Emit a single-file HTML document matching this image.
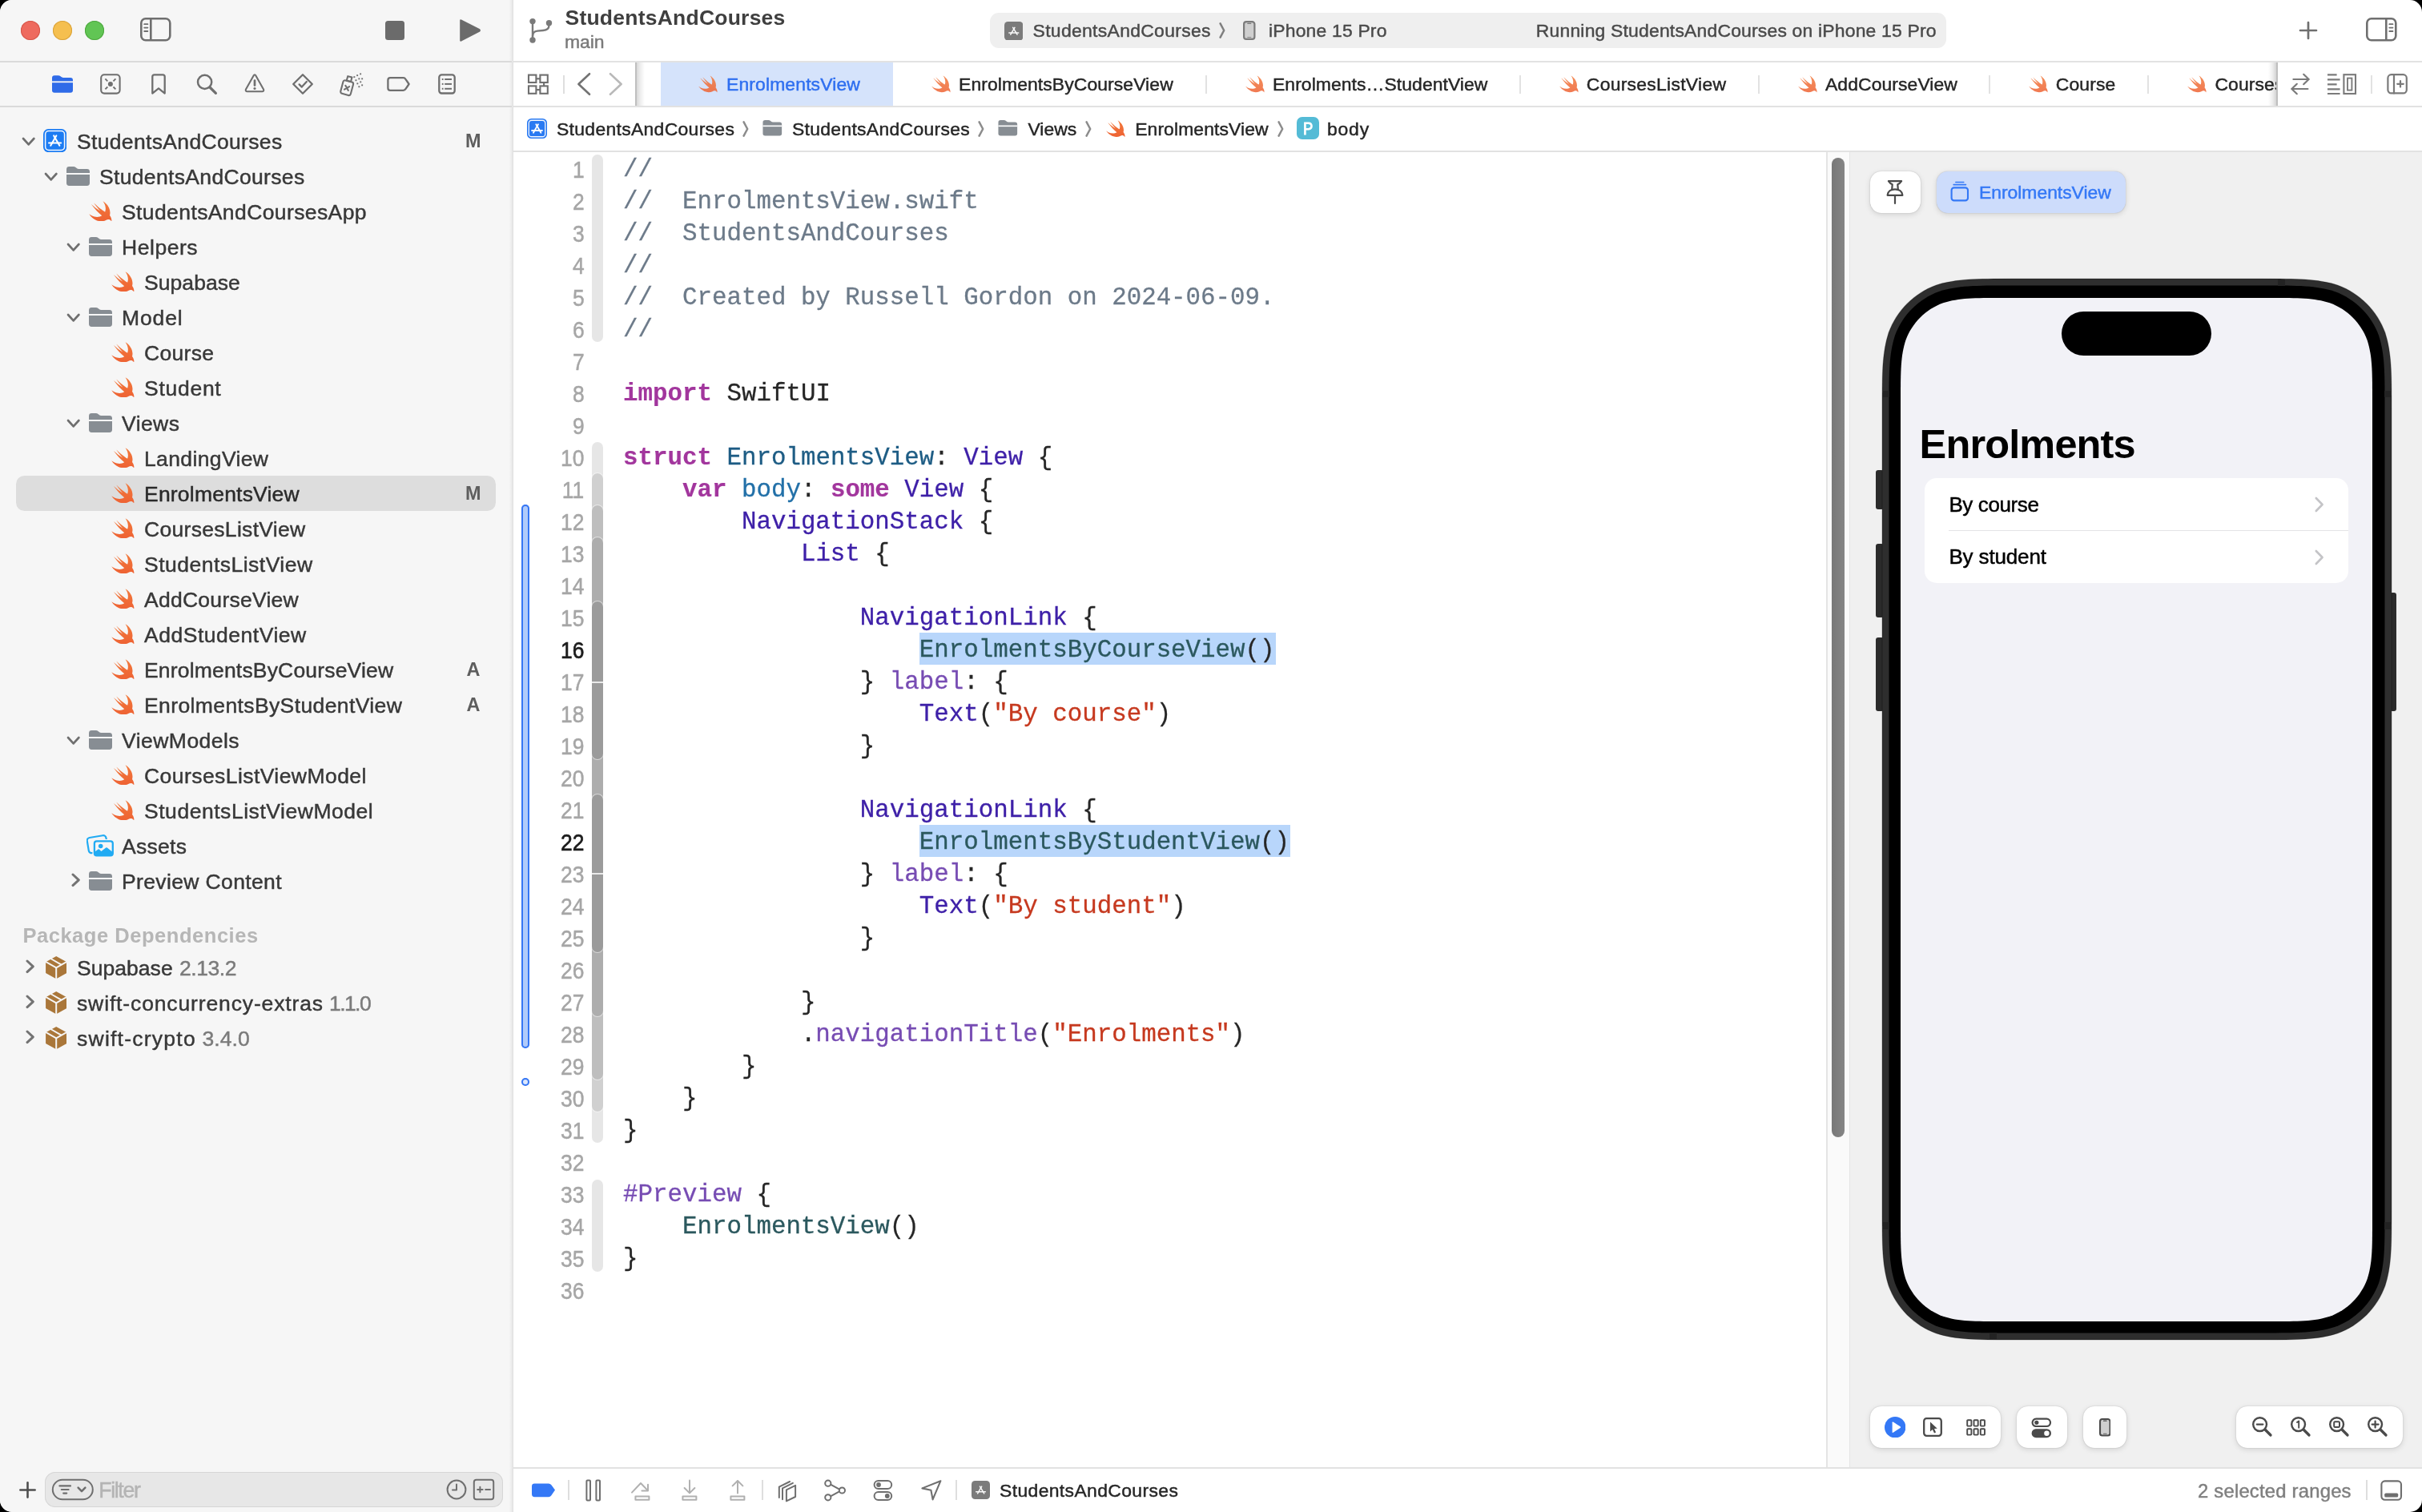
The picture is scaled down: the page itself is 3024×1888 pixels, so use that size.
<!DOCTYPE html>
<html><head><meta charset="utf-8"><title>Xcode</title>
<style>
html,body{margin:0;padding:0;background:#000;}
body{width:3024px;height:1888px;overflow:hidden;position:relative;font-family:"Liberation Sans",sans-serif;}
#win{will-change:transform;position:absolute;left:0;top:0;width:3024px;height:1888px;border-radius:15px;overflow:hidden;background:#fff;}
.a{position:absolute;display:block;}
.t{position:absolute;white-space:pre;font-family:"Liberation Sans",sans-serif;}
.c{position:absolute;white-space:pre;font-family:"Liberation Mono",monospace;font-size:31.8px;letter-spacing:0;height:40px;line-height:40px;left:778px;color:#262626;-webkit-text-stroke:0.3px currentColor;transform:scaleX(0.969);transform-origin:0 0;}
.c b{font-weight:bold;-webkit-text-stroke:0.15px currentColor;}
.k{color:#a2369d}.cm{color:#6c7a89}.s{color:#c6391f}.ty{color:#1d5c84}.od{color:#2270a8}.pc{color:#2b585e}.oc{color:#3e20a8}.of{color:#774cb3}

</style></head><body><div id="win">
<div class="a" style="left:0px;top:0px;width:640px;height:1888px;background:#f6f6f6;"></div>
<div class="a" style="left:0px;top:76px;width:639px;height:2px;background:#dadada;"></div>
<div class="a" style="left:0px;top:132px;width:639px;height:2px;background:#dadada;"></div>
<div class="a" style="left:641px;top:76px;width:2383px;height:2px;background:#e2e2e2;"></div>
<div class="a" style="left:641px;top:132px;width:2383px;height:2px;background:#e2e2e2;"></div>
<div class="a" style="left:641px;top:188px;width:2383px;height:2px;background:#e2e2e2;"></div>
<div class="a" style="left:636px;top:0px;width:5px;height:1888px;background:linear-gradient(90deg,#f5f5f5 0%,#ececec 55%,#dedede 100%);"></div>
<div class="a" style="left:636px;top:76px;width:3px;height:2px;background:#dadada;"></div>
<div class="a" style="left:636px;top:132px;width:3px;height:2px;background:#dadada;"></div>
<div class="a" style="left:641px;top:1832px;width:2383px;height:2px;background:#e2e2e2;"></div>
<div class="a" style="left:26px;top:26px;width:24px;height:24px;background:#ee6a5e;border-radius:50%;box-shadow:inset 0 0 0 1px #d5564a;"></div>
<div class="a" style="left:66px;top:26px;width:24px;height:24px;background:#f5bf4f;border-radius:50%;box-shadow:inset 0 0 0 1px #d9a23b;"></div>
<div class="a" style="left:106px;top:26px;width:24px;height:24px;background:#61c554;border-radius:50%;box-shadow:inset 0 0 0 1px #4ea73f;"></div>
<svg class="a" style="left:174px;top:21px;" width="41" height="32" viewBox="0 0 41 32"><g fill="none" stroke="#6f6f6f" stroke-width="2.6"><rect x="2.3" y="2.3" width="36" height="27" rx="5.5"/><path d="M14.3 2.3 V29.3"/></g><g stroke="#6f6f6f" stroke-width="1.8" stroke-linecap="round"><path d="M6.2 9.2 H10.4"/><path d="M6.2 13.6 H10.4"/><path d="M6.2 18 H10.4"/></g></svg>
<div class="a" style="left:481px;top:26px;width:24px;height:24px;background:#6b6b6b;border-radius:3.5px;"></div>
<svg class="a" style="left:572px;top:22px;" width="32" height="32" viewBox="0 0 32 32"><path d="M2.2 3.6 Q2.2 1.6 4 2.5 L27.2 14.3 Q29 16 27.2 17.6 L4 29.4 Q2.2 30.3 2.2 28.3 Z" fill="#6b6b6b"/></svg>
<svg class="a" style="left:659px;top:21px;" width="33" height="36" viewBox="0 0 33 36"><g fill="none" stroke="#7a7a7a" stroke-width="2.4" stroke-linecap="round"><path d="M6 6 V29"/><path d="M26.5 8.5 V10.5 Q26.5 16.5 19 17 L12 17.6 Q6 18.3 6 24"/></g><g fill="#7a7a7a"><circle cx="6" cy="5.6" r="3.7"/><circle cx="6" cy="29" r="3.7"/><circle cx="26.5" cy="7.8" r="3.7"/></g></svg>
<div class="t" style="left:705.5px;top:4.4px;height:36px;line-height:36px;font-size:26.52px;color:#3f3f3f;letter-spacing:0.22px;font-weight:bold;">StudentsAndCourses</div>
<div class="t" style="left:705.0px;top:35.8px;height:32px;line-height:32px;font-size:22.95px;color:#7a7a7a;letter-spacing:-0.10px;-webkit-text-stroke:0.45px #7a7a7a;">main</div>
<div class="a" style="left:1236px;top:16px;width:1194px;height:44px;background:#efefef;border-radius:11px;"></div>
<svg class="a" style="left:1253.8px;top:26.6px;" width="23.5" height="23.5" viewBox="0 0 29 29"><rect x="0" y="0" width="29" height="29" rx="5.5" fill="#7b7b7b"/><g stroke="#fff" stroke-width="1.9" stroke-linecap="round" fill="none" opacity="0.95"><path d="M9.6 20 L16 9"/><path d="M13.2 9 L19.8 20"/><path d="M7.2 17.2 H21.8"/></g></svg>
<div class="t" style="left:1289.6px;top:22.0px;height:32px;line-height:32px;font-size:22.95px;color:#4a4a4a;letter-spacing:0.30px;-webkit-text-stroke:0.45px #4a4a4a;">StudentsAndCourses</div>
<svg class="a" style="left:1522px;top:27px;" width="9" height="22" viewBox="0 0 9 22"><polyline points="1.6,2.4 6.2,11 1.6,19.6" fill="none" stroke="#7f7f7f" stroke-width="2.5" stroke-linecap="round" stroke-linejoin="round"/></svg>
<svg class="a" style="left:1552px;top:26.2px;" width="15.5" height="24" viewBox="0 0 15.5 24"><rect x="1.1" y="1.1" width="13.3" height="21.8" rx="3" fill="#cfcfcf" stroke="#7b7b7b" stroke-width="2.2"/><rect x="5.2" y="2.7" width="5.1" height="1.4" rx="0.7" fill="#7b7b7b"/><rect x="5.2" y="19.9" width="5.1" height="1.2" rx="0.6" fill="#7b7b7b" opacity="0.8"/></svg>
<div class="t" style="left:1584.0px;top:22.0px;height:32px;line-height:32px;font-size:22.95px;color:#4a4a4a;letter-spacing:0.17px;-webkit-text-stroke:0.45px #4a4a4a;">iPhone 15 Pro</div>
<div class="t" style="left:1917.8px;top:22.0px;height:32px;line-height:32px;font-size:22.95px;color:#4a4a4a;letter-spacing:0.18px;-webkit-text-stroke:0.45px #4a4a4a;">Running StudentsAndCourses on iPhone 15 Pro</div>
<svg class="a" style="left:2868px;top:24px;" width="28" height="28" viewBox="0 0 28 28"><g stroke="#6f6f6f" stroke-width="2.7" stroke-linecap="round"><path d="M14 4 V24"/><path d="M4 14 H24"/></g></svg>
<svg class="a" style="left:2953px;top:21px;" width="42" height="32" viewBox="0 0 42 32"><g fill="none" stroke="#6f6f6f" stroke-width="2.6"><rect x="2.3" y="2.3" width="36" height="27" rx="5.5"/><path d="M26.3 2.3 V29.3"/></g><g stroke="#6f6f6f" stroke-width="1.8" stroke-linecap="round"><path d="M30.3 9.2 H34.5"/><path d="M30.3 13.6 H34.5"/><path d="M30.3 18 H34.5"/></g></svg>
<svg class="a" style="left:64.9px;top:93.8px;" width="26" height="22" viewBox="0 0 29 24"><path fill="#2f6be8" d="M0 3.4 Q0 0 3.4 0 H8.6 Q10.4 0 11.8 1.2 L12.8 2.1 Q13.8 3 15.4 3 H25.6 Q29 3 29 6.4 V20.6 Q29 24 25.6 24 H3.4 Q0 24 0 20.6 Z"/><rect x="0" y="8" width="29" height="2" fill="#f6f6f6"/></svg>
<svg class="a" style="left:123px;top:90px;" width="30" height="30" viewBox="0 0 30 30"><g fill="none" stroke="#6f6f6f" stroke-width="2.1"><rect x="3.2" y="3.2" width="23.4" height="23.4" rx="4"/><path d="M8.4 8.4 L11.3 11.3" stroke-width="1.9"/><path d="M21.4 8.4 L18.5 11.3" stroke-width="1.9"/><path d="M8.4 21.4 L11.3 18.5" stroke-width="1.9"/><path d="M21.4 21.4 L18.5 18.5" stroke-width="1.9"/></g><circle cx="14.9" cy="14.9" r="3" fill="#6f6f6f"/></svg>
<svg class="a" style="left:186px;top:90px;" width="24" height="30" viewBox="0 0 24 30"><path d="M4.3 5.8 Q4.3 3.3 6.8 3.3 H17.2 Q19.7 3.3 19.7 5.8 V26.6 L12 20.4 L4.3 26.6 Z" fill="none" stroke="#6f6f6f" stroke-width="2.3" stroke-linejoin="round"/></svg>
<svg class="a" style="left:243px;top:90px;" width="30" height="30" viewBox="0 0 30 30"><g fill="none" stroke="#6f6f6f" stroke-width="2.5" stroke-linecap="round"><circle cx="12.6" cy="12.4" r="8.6"/><path d="M19 19 L26.4 26.4" stroke-width="3.2"/></g></svg>
<svg class="a" style="left:304px;top:90px;" width="28" height="28" viewBox="0 0 28 28"><path d="M12.6 4.4 Q14 2.2 15.4 4.4 L25 21.4 Q26 24.2 23.2 24.2 H4.8 Q2 24.2 3 21.4 Z" fill="none" stroke="#6f6f6f" stroke-width="2.1" stroke-linejoin="round"/><path d="M14 10.6 V16.6" stroke="#6f6f6f" stroke-width="2.7" stroke-linecap="round"/><circle cx="14" cy="20.5" r="1.55" fill="#6f6f6f"/></svg>
<svg class="a" style="left:362px;top:89px;" width="32" height="32" viewBox="0 0 32 32"><g fill="none" stroke="#6f6f6f" stroke-width="2.3" stroke-linejoin="round" stroke-linecap="round"><path d="M16 4.2 L27.8 16 L16 27.8 L4.2 16 Z"/><path d="M11.6 16.4 L14.8 19.6 L20.8 13"/></g></svg>
<svg class="a" style="left:422px;top:88px;" width="34" height="34" viewBox="0 0 34 34"><g fill="none" stroke="#6f6f6f" stroke-width="2.1" stroke-linejoin="round" stroke-linecap="round" transform="rotate(15 12 22)"><rect x="4.6" y="13.4" width="13" height="17" rx="2.4"/><rect x="8.4" y="7.6" width="5.4" height="5.6"/><path d="M8.6 19.6 L13.6 24.6 M13.6 19.6 L8.6 24.6"/></g><g fill="#6f6f6f"><rect x="19.4" y="7.2" width="1.9" height="1.9"/><rect x="23.2" y="5.2" width="1.9" height="1.9"/><rect x="27.2" y="3.4" width="1.9" height="1.9"/><rect x="21.5" y="11.3" width="1.9" height="1.9"/><rect x="25.4" y="9.4" width="1.9" height="1.9"/><rect x="29.2" y="9.4" width="1.9" height="1.9"/><rect x="23.4" y="15.4" width="1.9" height="1.9"/><rect x="27.3" y="13.4" width="1.9" height="1.9"/><rect x="25.4" y="19.3" width="1.9" height="1.9"/><rect x="29.2" y="17.4" width="1.9" height="1.9"/></g></svg>
<svg class="a" style="left:481px;top:93px;" width="34" height="24" viewBox="0 0 34 24"><path d="M6.2 4.2 H22.6 Q24.4 4.2 25.4 5.8 L29.6 12 L25.4 18.2 Q24.4 19.8 22.6 19.8 H6.2 Q3.4 19.8 3.4 17 V7 Q3.4 4.2 6.2 4.2 Z" fill="none" stroke="#6f6f6f" stroke-width="2.3" stroke-linejoin="round"/></svg>
<svg class="a" style="left:545px;top:90px;" width="26" height="30" viewBox="0 0 26 30"><rect x="3.3" y="3.3" width="19.4" height="23.2" rx="3.2" fill="none" stroke="#6f6f6f" stroke-width="2.3"/><g stroke="#6f6f6f" stroke-width="2" ><path d="M10.2 9 H19"/><path d="M10.2 14.9 H19"/><path d="M10.2 20.8 H19"/><path d="M6.8 9 H8.6"/><path d="M6.8 14.9 H8.6"/><path d="M6.8 20.8 H8.6"/></g></svg>
<svg class="a" style="left:27.3px;top:171.3px;" width="17.4" height="11.4" viewBox="0 0 17.4 11.4"><polyline points="2,2 8.7,9.4 15.4,2" fill="none" stroke="#6f6f6f" stroke-width="2.7" stroke-linecap="round" stroke-linejoin="round"/></svg>
<svg class="a" style="left:54.2px;top:161.1px;" width="29.2" height="29.2" viewBox="0 0 29 29"><rect x="0" y="0" width="29" height="29" rx="6.4" fill="#1c7cf3"/><rect x="2.6" y="2.6" width="23.8" height="23.8" rx="4.2" fill="none" stroke="#fff" stroke-width="1.5" opacity="0.95"/><g stroke="#fff" stroke-width="2.1" stroke-linecap="round" fill="none"><path d="M9.2 20.6 L16.2 8.4"/><path d="M13.1 8.4 L20.2 20.6"/><path d="M7 17.4 H22"/></g></svg>
<div class="t" style="left:96.0px;top:159.0px;height:36px;line-height:36px;font-size:26.52px;color:#383838;letter-spacing:0.33px;-webkit-text-stroke:0.45px #383838;">StudentsAndCourses</div>
<div class="t" style="left:581.1px;top:160.1px;height:32px;line-height:32px;font-size:23.46px;color:#5e5e5e;letter-spacing:0.00px;font-weight:bold;">M</div>
<svg class="a" style="left:55.3px;top:215.3px;" width="17.4" height="11.4" viewBox="0 0 17.4 11.4"><polyline points="2,2 8.7,9.4 15.4,2" fill="none" stroke="#6f6f6f" stroke-width="2.7" stroke-linecap="round" stroke-linejoin="round"/></svg>
<svg class="a" style="left:82.5px;top:208.0px;" width="29" height="24" viewBox="0 0 29 24"><path fill="#878d93" d="M0 3.4 Q0 0 3.4 0 H8.6 Q10.4 0 11.8 1.2 L12.8 2.1 Q13.8 3 15.4 3 H25.6 Q29 3 29 6.4 V20.6 Q29 24 25.6 24 H3.4 Q0 24 0 20.6 Z"/><rect x="0" y="8" width="29" height="2" fill="#f6f6f6"/></svg>
<div class="t" style="left:124.0px;top:203.0px;height:36px;line-height:36px;font-size:26.52px;color:#383838;letter-spacing:0.33px;-webkit-text-stroke:0.45px #383838;">StudentsAndCourses</div>
<svg class="a" style="left:110.5px;top:250.5px;" width="29" height="25.8" viewBox="2.3 3.3 18.6 16.6"><defs><linearGradient id="sg1" x1="0" y1="0" x2="0" y2="1"><stop offset="0" stop-color="#f27a3c"/><stop offset="1" stop-color="#ee6233"/></linearGradient></defs><path fill="url(#sg1)" opacity="1" d="M13.543 3.41c4.114 2.47 6.545 7.162 5.549 11.131-.024.093-.05.181-.076.272l.002.001c2.062 2.538 1.5 5.258 1.236 4.745-1.072-2.086-3.066-1.568-4.088-1.043a6.803 6.803 0 0 1-.281.158l-.02.012-.002.002c-2.115 1.123-4.957 1.205-7.812-.022a12.568 12.568 0 0 1-5.64-4.838c.649.48 1.35.902 2.097 1.252 3.019 1.414 6.051 1.311 8.197-.002C9.651 12.73 7.101 9.67 5.146 7.191a10.628 10.628 0 0 1-1.005-1.384c2.34 2.142 6.038 4.83 7.365 5.576C8.69 8.408 6.208 4.743 6.324 4.86c4.436 4.47 8.528 6.996 8.528 6.996.154.085.27.154.36.213.085-.215.16-.437.224-.668.708-2.588-.09-5.548-1.893-7.992z"/></svg>
<div class="t" style="left:152.0px;top:247.0px;height:36px;line-height:36px;font-size:26.52px;color:#383838;letter-spacing:0.39px;-webkit-text-stroke:0.45px #383838;">StudentsAndCoursesApp</div>
<svg class="a" style="left:83.3px;top:303.3px;" width="17.4" height="11.4" viewBox="0 0 17.4 11.4"><polyline points="2,2 8.7,9.4 15.4,2" fill="none" stroke="#6f6f6f" stroke-width="2.7" stroke-linecap="round" stroke-linejoin="round"/></svg>
<svg class="a" style="left:110.5px;top:296.0px;" width="29" height="24" viewBox="0 0 29 24"><path fill="#878d93" d="M0 3.4 Q0 0 3.4 0 H8.6 Q10.4 0 11.8 1.2 L12.8 2.1 Q13.8 3 15.4 3 H25.6 Q29 3 29 6.4 V20.6 Q29 24 25.6 24 H3.4 Q0 24 0 20.6 Z"/><rect x="0" y="8" width="29" height="2" fill="#f6f6f6"/></svg>
<div class="t" style="left:152.0px;top:291.0px;height:36px;line-height:36px;font-size:26.52px;color:#383838;letter-spacing:0.53px;-webkit-text-stroke:0.45px #383838;">Helpers</div>
<svg class="a" style="left:138.5px;top:338.5px;" width="29" height="25.8" viewBox="2.3 3.3 18.6 16.6"><defs><linearGradient id="sg2" x1="0" y1="0" x2="0" y2="1"><stop offset="0" stop-color="#f27a3c"/><stop offset="1" stop-color="#ee6233"/></linearGradient></defs><path fill="url(#sg2)" opacity="1" d="M13.543 3.41c4.114 2.47 6.545 7.162 5.549 11.131-.024.093-.05.181-.076.272l.002.001c2.062 2.538 1.5 5.258 1.236 4.745-1.072-2.086-3.066-1.568-4.088-1.043a6.803 6.803 0 0 1-.281.158l-.02.012-.002.002c-2.115 1.123-4.957 1.205-7.812-.022a12.568 12.568 0 0 1-5.64-4.838c.649.48 1.35.902 2.097 1.252 3.019 1.414 6.051 1.311 8.197-.002C9.651 12.73 7.101 9.67 5.146 7.191a10.628 10.628 0 0 1-1.005-1.384c2.34 2.142 6.038 4.83 7.365 5.576C8.69 8.408 6.208 4.743 6.324 4.86c4.436 4.47 8.528 6.996 8.528 6.996.154.085.27.154.36.213.085-.215.16-.437.224-.668.708-2.588-.09-5.548-1.893-7.992z"/></svg>
<div class="t" style="left:180.0px;top:335.0px;height:36px;line-height:36px;font-size:26.52px;color:#383838;letter-spacing:0.06px;-webkit-text-stroke:0.45px #383838;">Supabase</div>
<svg class="a" style="left:83.3px;top:391.3px;" width="17.4" height="11.4" viewBox="0 0 17.4 11.4"><polyline points="2,2 8.7,9.4 15.4,2" fill="none" stroke="#6f6f6f" stroke-width="2.7" stroke-linecap="round" stroke-linejoin="round"/></svg>
<svg class="a" style="left:110.5px;top:384.0px;" width="29" height="24" viewBox="0 0 29 24"><path fill="#878d93" d="M0 3.4 Q0 0 3.4 0 H8.6 Q10.4 0 11.8 1.2 L12.8 2.1 Q13.8 3 15.4 3 H25.6 Q29 3 29 6.4 V20.6 Q29 24 25.6 24 H3.4 Q0 24 0 20.6 Z"/><rect x="0" y="8" width="29" height="2" fill="#f6f6f6"/></svg>
<div class="t" style="left:152.0px;top:379.0px;height:36px;line-height:36px;font-size:26.52px;color:#383838;letter-spacing:0.88px;-webkit-text-stroke:0.45px #383838;">Model</div>
<svg class="a" style="left:138.5px;top:426.5px;" width="29" height="25.8" viewBox="2.3 3.3 18.6 16.6"><defs><linearGradient id="sg3" x1="0" y1="0" x2="0" y2="1"><stop offset="0" stop-color="#f27a3c"/><stop offset="1" stop-color="#ee6233"/></linearGradient></defs><path fill="url(#sg3)" opacity="1" d="M13.543 3.41c4.114 2.47 6.545 7.162 5.549 11.131-.024.093-.05.181-.076.272l.002.001c2.062 2.538 1.5 5.258 1.236 4.745-1.072-2.086-3.066-1.568-4.088-1.043a6.803 6.803 0 0 1-.281.158l-.02.012-.002.002c-2.115 1.123-4.957 1.205-7.812-.022a12.568 12.568 0 0 1-5.64-4.838c.649.48 1.35.902 2.097 1.252 3.019 1.414 6.051 1.311 8.197-.002C9.651 12.73 7.101 9.67 5.146 7.191a10.628 10.628 0 0 1-1.005-1.384c2.34 2.142 6.038 4.83 7.365 5.576C8.69 8.408 6.208 4.743 6.324 4.86c4.436 4.47 8.528 6.996 8.528 6.996.154.085.27.154.36.213.085-.215.16-.437.224-.668.708-2.588-.09-5.548-1.893-7.992z"/></svg>
<div class="t" style="left:180.0px;top:423.0px;height:36px;line-height:36px;font-size:26.52px;color:#383838;letter-spacing:0.31px;-webkit-text-stroke:0.45px #383838;">Course</div>
<svg class="a" style="left:138.5px;top:470.5px;" width="29" height="25.8" viewBox="2.3 3.3 18.6 16.6"><defs><linearGradient id="sg4" x1="0" y1="0" x2="0" y2="1"><stop offset="0" stop-color="#f27a3c"/><stop offset="1" stop-color="#ee6233"/></linearGradient></defs><path fill="url(#sg4)" opacity="1" d="M13.543 3.41c4.114 2.47 6.545 7.162 5.549 11.131-.024.093-.05.181-.076.272l.002.001c2.062 2.538 1.5 5.258 1.236 4.745-1.072-2.086-3.066-1.568-4.088-1.043a6.803 6.803 0 0 1-.281.158l-.02.012-.002.002c-2.115 1.123-4.957 1.205-7.812-.022a12.568 12.568 0 0 1-5.64-4.838c.649.48 1.35.902 2.097 1.252 3.019 1.414 6.051 1.311 8.197-.002C9.651 12.73 7.101 9.67 5.146 7.191a10.628 10.628 0 0 1-1.005-1.384c2.34 2.142 6.038 4.83 7.365 5.576C8.69 8.408 6.208 4.743 6.324 4.86c4.436 4.47 8.528 6.996 8.528 6.996.154.085.27.154.36.213.085-.215.16-.437.224-.668.708-2.588-.09-5.548-1.893-7.992z"/></svg>
<div class="t" style="left:180.0px;top:467.0px;height:36px;line-height:36px;font-size:26.52px;color:#383838;letter-spacing:0.72px;-webkit-text-stroke:0.45px #383838;">Student</div>
<svg class="a" style="left:83.3px;top:523.3px;" width="17.4" height="11.4" viewBox="0 0 17.4 11.4"><polyline points="2,2 8.7,9.4 15.4,2" fill="none" stroke="#6f6f6f" stroke-width="2.7" stroke-linecap="round" stroke-linejoin="round"/></svg>
<svg class="a" style="left:110.5px;top:516.0px;" width="29" height="24" viewBox="0 0 29 24"><path fill="#878d93" d="M0 3.4 Q0 0 3.4 0 H8.6 Q10.4 0 11.8 1.2 L12.8 2.1 Q13.8 3 15.4 3 H25.6 Q29 3 29 6.4 V20.6 Q29 24 25.6 24 H3.4 Q0 24 0 20.6 Z"/><rect x="0" y="8" width="29" height="2" fill="#f6f6f6"/></svg>
<div class="t" style="left:152.0px;top:511.0px;height:36px;line-height:36px;font-size:26.52px;color:#383838;letter-spacing:0.42px;-webkit-text-stroke:0.45px #383838;">Views</div>
<svg class="a" style="left:138.5px;top:558.5px;" width="29" height="25.8" viewBox="2.3 3.3 18.6 16.6"><defs><linearGradient id="sg5" x1="0" y1="0" x2="0" y2="1"><stop offset="0" stop-color="#f27a3c"/><stop offset="1" stop-color="#ee6233"/></linearGradient></defs><path fill="url(#sg5)" opacity="1" d="M13.543 3.41c4.114 2.47 6.545 7.162 5.549 11.131-.024.093-.05.181-.076.272l.002.001c2.062 2.538 1.5 5.258 1.236 4.745-1.072-2.086-3.066-1.568-4.088-1.043a6.803 6.803 0 0 1-.281.158l-.02.012-.002.002c-2.115 1.123-4.957 1.205-7.812-.022a12.568 12.568 0 0 1-5.64-4.838c.649.48 1.35.902 2.097 1.252 3.019 1.414 6.051 1.311 8.197-.002C9.651 12.73 7.101 9.67 5.146 7.191a10.628 10.628 0 0 1-1.005-1.384c2.34 2.142 6.038 4.83 7.365 5.576C8.69 8.408 6.208 4.743 6.324 4.86c4.436 4.47 8.528 6.996 8.528 6.996.154.085.27.154.36.213.085-.215.16-.437.224-.668.708-2.588-.09-5.548-1.893-7.992z"/></svg>
<div class="t" style="left:180.0px;top:555.0px;height:36px;line-height:36px;font-size:26.52px;color:#383838;letter-spacing:0.36px;-webkit-text-stroke:0.45px #383838;">LandingView</div>
<div class="a" style="left:20px;top:594.0px;width:599px;height:44px;background:#dddddd;border-radius:10.5px;"></div>
<svg class="a" style="left:138.5px;top:602.5px;" width="29" height="25.8" viewBox="2.3 3.3 18.6 16.6"><defs><linearGradient id="sg6" x1="0" y1="0" x2="0" y2="1"><stop offset="0" stop-color="#f27a3c"/><stop offset="1" stop-color="#ee6233"/></linearGradient></defs><path fill="url(#sg6)" opacity="1" d="M13.543 3.41c4.114 2.47 6.545 7.162 5.549 11.131-.024.093-.05.181-.076.272l.002.001c2.062 2.538 1.5 5.258 1.236 4.745-1.072-2.086-3.066-1.568-4.088-1.043a6.803 6.803 0 0 1-.281.158l-.02.012-.002.002c-2.115 1.123-4.957 1.205-7.812-.022a12.568 12.568 0 0 1-5.64-4.838c.649.48 1.35.902 2.097 1.252 3.019 1.414 6.051 1.311 8.197-.002C9.651 12.73 7.101 9.67 5.146 7.191a10.628 10.628 0 0 1-1.005-1.384c2.34 2.142 6.038 4.83 7.365 5.576C8.69 8.408 6.208 4.743 6.324 4.86c4.436 4.47 8.528 6.996 8.528 6.996.154.085.27.154.36.213.085-.215.16-.437.224-.668.708-2.588-.09-5.548-1.893-7.992z"/></svg>
<div class="t" style="left:180.0px;top:599.0px;height:36px;line-height:36px;font-size:26.52px;color:#2a2a2a;letter-spacing:0.20px;-webkit-text-stroke:0.45px #2a2a2a;">EnrolmentsView</div>
<div class="t" style="left:581.1px;top:600.1px;height:32px;line-height:32px;font-size:23.46px;color:#5e5e5e;letter-spacing:0.00px;font-weight:bold;">M</div>
<svg class="a" style="left:138.5px;top:646.5px;" width="29" height="25.8" viewBox="2.3 3.3 18.6 16.6"><defs><linearGradient id="sg7" x1="0" y1="0" x2="0" y2="1"><stop offset="0" stop-color="#f27a3c"/><stop offset="1" stop-color="#ee6233"/></linearGradient></defs><path fill="url(#sg7)" opacity="1" d="M13.543 3.41c4.114 2.47 6.545 7.162 5.549 11.131-.024.093-.05.181-.076.272l.002.001c2.062 2.538 1.5 5.258 1.236 4.745-1.072-2.086-3.066-1.568-4.088-1.043a6.803 6.803 0 0 1-.281.158l-.02.012-.002.002c-2.115 1.123-4.957 1.205-7.812-.022a12.568 12.568 0 0 1-5.64-4.838c.649.48 1.35.902 2.097 1.252 3.019 1.414 6.051 1.311 8.197-.002C9.651 12.73 7.101 9.67 5.146 7.191a10.628 10.628 0 0 1-1.005-1.384c2.34 2.142 6.038 4.83 7.365 5.576C8.69 8.408 6.208 4.743 6.324 4.86c4.436 4.47 8.528 6.996 8.528 6.996.154.085.27.154.36.213.085-.215.16-.437.224-.668.708-2.588-.09-5.548-1.893-7.992z"/></svg>
<div class="t" style="left:180.0px;top:643.0px;height:36px;line-height:36px;font-size:26.52px;color:#383838;letter-spacing:0.30px;-webkit-text-stroke:0.45px #383838;">CoursesListView</div>
<svg class="a" style="left:138.5px;top:690.5px;" width="29" height="25.8" viewBox="2.3 3.3 18.6 16.6"><defs><linearGradient id="sg8" x1="0" y1="0" x2="0" y2="1"><stop offset="0" stop-color="#f27a3c"/><stop offset="1" stop-color="#ee6233"/></linearGradient></defs><path fill="url(#sg8)" opacity="1" d="M13.543 3.41c4.114 2.47 6.545 7.162 5.549 11.131-.024.093-.05.181-.076.272l.002.001c2.062 2.538 1.5 5.258 1.236 4.745-1.072-2.086-3.066-1.568-4.088-1.043a6.803 6.803 0 0 1-.281.158l-.02.012-.002.002c-2.115 1.123-4.957 1.205-7.812-.022a12.568 12.568 0 0 1-5.64-4.838c.649.48 1.35.902 2.097 1.252 3.019 1.414 6.051 1.311 8.197-.002C9.651 12.73 7.101 9.67 5.146 7.191a10.628 10.628 0 0 1-1.005-1.384c2.34 2.142 6.038 4.83 7.365 5.576C8.69 8.408 6.208 4.743 6.324 4.86c4.436 4.47 8.528 6.996 8.528 6.996.154.085.27.154.36.213.085-.215.16-.437.224-.668.708-2.588-.09-5.548-1.893-7.992z"/></svg>
<div class="t" style="left:180.0px;top:687.0px;height:36px;line-height:36px;font-size:26.52px;color:#383838;letter-spacing:0.48px;-webkit-text-stroke:0.45px #383838;">StudentsListView</div>
<svg class="a" style="left:138.5px;top:734.5px;" width="29" height="25.8" viewBox="2.3 3.3 18.6 16.6"><defs><linearGradient id="sg9" x1="0" y1="0" x2="0" y2="1"><stop offset="0" stop-color="#f27a3c"/><stop offset="1" stop-color="#ee6233"/></linearGradient></defs><path fill="url(#sg9)" opacity="1" d="M13.543 3.41c4.114 2.47 6.545 7.162 5.549 11.131-.024.093-.05.181-.076.272l.002.001c2.062 2.538 1.5 5.258 1.236 4.745-1.072-2.086-3.066-1.568-4.088-1.043a6.803 6.803 0 0 1-.281.158l-.02.012-.002.002c-2.115 1.123-4.957 1.205-7.812-.022a12.568 12.568 0 0 1-5.64-4.838c.649.48 1.35.902 2.097 1.252 3.019 1.414 6.051 1.311 8.197-.002C9.651 12.73 7.101 9.67 5.146 7.191a10.628 10.628 0 0 1-1.005-1.384c2.34 2.142 6.038 4.83 7.365 5.576C8.69 8.408 6.208 4.743 6.324 4.86c4.436 4.47 8.528 6.996 8.528 6.996.154.085.27.154.36.213.085-.215.16-.437.224-.668.708-2.588-.09-5.548-1.893-7.992z"/></svg>
<div class="t" style="left:180.0px;top:731.0px;height:36px;line-height:36px;font-size:26.52px;color:#383838;letter-spacing:0.26px;-webkit-text-stroke:0.45px #383838;">AddCourseView</div>
<svg class="a" style="left:138.5px;top:778.5px;" width="29" height="25.8" viewBox="2.3 3.3 18.6 16.6"><defs><linearGradient id="sg10" x1="0" y1="0" x2="0" y2="1"><stop offset="0" stop-color="#f27a3c"/><stop offset="1" stop-color="#ee6233"/></linearGradient></defs><path fill="url(#sg10)" opacity="1" d="M13.543 3.41c4.114 2.47 6.545 7.162 5.549 11.131-.024.093-.05.181-.076.272l.002.001c2.062 2.538 1.5 5.258 1.236 4.745-1.072-2.086-3.066-1.568-4.088-1.043a6.803 6.803 0 0 1-.281.158l-.02.012-.002.002c-2.115 1.123-4.957 1.205-7.812-.022a12.568 12.568 0 0 1-5.64-4.838c.649.48 1.35.902 2.097 1.252 3.019 1.414 6.051 1.311 8.197-.002C9.651 12.73 7.101 9.67 5.146 7.191a10.628 10.628 0 0 1-1.005-1.384c2.34 2.142 6.038 4.83 7.365 5.576C8.69 8.408 6.208 4.743 6.324 4.86c4.436 4.47 8.528 6.996 8.528 6.996.154.085.27.154.36.213.085-.215.16-.437.224-.668.708-2.588-.09-5.548-1.893-7.992z"/></svg>
<div class="t" style="left:180.0px;top:775.0px;height:36px;line-height:36px;font-size:26.52px;color:#383838;letter-spacing:0.51px;-webkit-text-stroke:0.45px #383838;">AddStudentView</div>
<svg class="a" style="left:138.5px;top:822.5px;" width="29" height="25.8" viewBox="2.3 3.3 18.6 16.6"><defs><linearGradient id="sg11" x1="0" y1="0" x2="0" y2="1"><stop offset="0" stop-color="#f27a3c"/><stop offset="1" stop-color="#ee6233"/></linearGradient></defs><path fill="url(#sg11)" opacity="1" d="M13.543 3.41c4.114 2.47 6.545 7.162 5.549 11.131-.024.093-.05.181-.076.272l.002.001c2.062 2.538 1.5 5.258 1.236 4.745-1.072-2.086-3.066-1.568-4.088-1.043a6.803 6.803 0 0 1-.281.158l-.02.012-.002.002c-2.115 1.123-4.957 1.205-7.812-.022a12.568 12.568 0 0 1-5.64-4.838c.649.48 1.35.902 2.097 1.252 3.019 1.414 6.051 1.311 8.197-.002C9.651 12.73 7.101 9.67 5.146 7.191a10.628 10.628 0 0 1-1.005-1.384c2.34 2.142 6.038 4.83 7.365 5.576C8.69 8.408 6.208 4.743 6.324 4.86c4.436 4.47 8.528 6.996 8.528 6.996.154.085.27.154.36.213.085-.215.16-.437.224-.668.708-2.588-.09-5.548-1.893-7.992z"/></svg>
<div class="t" style="left:180.0px;top:819.0px;height:36px;line-height:36px;font-size:26.52px;color:#383838;letter-spacing:0.17px;-webkit-text-stroke:0.45px #383838;">EnrolmentsByCourseView</div>
<div class="t" style="left:582.5px;top:820.1px;height:32px;line-height:32px;font-size:23.46px;color:#5e5e5e;letter-spacing:0.00px;font-weight:bold;">A</div>
<svg class="a" style="left:138.5px;top:866.5px;" width="29" height="25.8" viewBox="2.3 3.3 18.6 16.6"><defs><linearGradient id="sg12" x1="0" y1="0" x2="0" y2="1"><stop offset="0" stop-color="#f27a3c"/><stop offset="1" stop-color="#ee6233"/></linearGradient></defs><path fill="url(#sg12)" opacity="1" d="M13.543 3.41c4.114 2.47 6.545 7.162 5.549 11.131-.024.093-.05.181-.076.272l.002.001c2.062 2.538 1.5 5.258 1.236 4.745-1.072-2.086-3.066-1.568-4.088-1.043a6.803 6.803 0 0 1-.281.158l-.02.012-.002.002c-2.115 1.123-4.957 1.205-7.812-.022a12.568 12.568 0 0 1-5.64-4.838c.649.48 1.35.902 2.097 1.252 3.019 1.414 6.051 1.311 8.197-.002C9.651 12.73 7.101 9.67 5.146 7.191a10.628 10.628 0 0 1-1.005-1.384c2.34 2.142 6.038 4.83 7.365 5.576C8.69 8.408 6.208 4.743 6.324 4.86c4.436 4.47 8.528 6.996 8.528 6.996.154.085.27.154.36.213.085-.215.16-.437.224-.668.708-2.588-.09-5.548-1.893-7.992z"/></svg>
<div class="t" style="left:180.0px;top:863.0px;height:36px;line-height:36px;font-size:26.52px;color:#383838;letter-spacing:0.38px;-webkit-text-stroke:0.45px #383838;">EnrolmentsByStudentView</div>
<div class="t" style="left:582.5px;top:864.1px;height:32px;line-height:32px;font-size:23.46px;color:#5e5e5e;letter-spacing:0.00px;font-weight:bold;">A</div>
<svg class="a" style="left:83.3px;top:919.3px;" width="17.4" height="11.4" viewBox="0 0 17.4 11.4"><polyline points="2,2 8.7,9.4 15.4,2" fill="none" stroke="#6f6f6f" stroke-width="2.7" stroke-linecap="round" stroke-linejoin="round"/></svg>
<svg class="a" style="left:110.5px;top:912.0px;" width="29" height="24" viewBox="0 0 29 24"><path fill="#878d93" d="M0 3.4 Q0 0 3.4 0 H8.6 Q10.4 0 11.8 1.2 L12.8 2.1 Q13.8 3 15.4 3 H25.6 Q29 3 29 6.4 V20.6 Q29 24 25.6 24 H3.4 Q0 24 0 20.6 Z"/><rect x="0" y="8" width="29" height="2" fill="#f6f6f6"/></svg>
<div class="t" style="left:152.0px;top:907.0px;height:36px;line-height:36px;font-size:26.52px;color:#383838;letter-spacing:0.46px;-webkit-text-stroke:0.45px #383838;">ViewModels</div>
<svg class="a" style="left:138.5px;top:954.5px;" width="29" height="25.8" viewBox="2.3 3.3 18.6 16.6"><defs><linearGradient id="sg13" x1="0" y1="0" x2="0" y2="1"><stop offset="0" stop-color="#f27a3c"/><stop offset="1" stop-color="#ee6233"/></linearGradient></defs><path fill="url(#sg13)" opacity="1" d="M13.543 3.41c4.114 2.47 6.545 7.162 5.549 11.131-.024.093-.05.181-.076.272l.002.001c2.062 2.538 1.5 5.258 1.236 4.745-1.072-2.086-3.066-1.568-4.088-1.043a6.803 6.803 0 0 1-.281.158l-.02.012-.002.002c-2.115 1.123-4.957 1.205-7.812-.022a12.568 12.568 0 0 1-5.64-4.838c.649.48 1.35.902 2.097 1.252 3.019 1.414 6.051 1.311 8.197-.002C9.651 12.73 7.101 9.67 5.146 7.191a10.628 10.628 0 0 1-1.005-1.384c2.34 2.142 6.038 4.83 7.365 5.576C8.69 8.408 6.208 4.743 6.324 4.86c4.436 4.47 8.528 6.996 8.528 6.996.154.085.27.154.36.213.085-.215.16-.437.224-.668.708-2.588-.09-5.548-1.893-7.992z"/></svg>
<div class="t" style="left:180.0px;top:951.0px;height:36px;line-height:36px;font-size:26.52px;color:#383838;letter-spacing:0.43px;-webkit-text-stroke:0.45px #383838;">CoursesListViewModel</div>
<svg class="a" style="left:138.5px;top:998.5px;" width="29" height="25.8" viewBox="2.3 3.3 18.6 16.6"><defs><linearGradient id="sg14" x1="0" y1="0" x2="0" y2="1"><stop offset="0" stop-color="#f27a3c"/><stop offset="1" stop-color="#ee6233"/></linearGradient></defs><path fill="url(#sg14)" opacity="1" d="M13.543 3.41c4.114 2.47 6.545 7.162 5.549 11.131-.024.093-.05.181-.076.272l.002.001c2.062 2.538 1.5 5.258 1.236 4.745-1.072-2.086-3.066-1.568-4.088-1.043a6.803 6.803 0 0 1-.281.158l-.02.012-.002.002c-2.115 1.123-4.957 1.205-7.812-.022a12.568 12.568 0 0 1-5.64-4.838c.649.48 1.35.902 2.097 1.252 3.019 1.414 6.051 1.311 8.197-.002C9.651 12.73 7.101 9.67 5.146 7.191a10.628 10.628 0 0 1-1.005-1.384c2.34 2.142 6.038 4.83 7.365 5.576C8.69 8.408 6.208 4.743 6.324 4.86c4.436 4.47 8.528 6.996 8.528 6.996.154.085.27.154.36.213.085-.215.16-.437.224-.668.708-2.588-.09-5.548-1.893-7.992z"/></svg>
<div class="t" style="left:180.0px;top:995.0px;height:36px;line-height:36px;font-size:26.52px;color:#383838;letter-spacing:0.53px;-webkit-text-stroke:0.45px #383838;">StudentsListViewModel</div>
<svg class="a" style="left:107.7px;top:1041.5px;" width="36" height="30" viewBox="0 0 36 30"><g transform="rotate(-9.5 13 12)"><rect x="1.6" y="2.6" width="24" height="19.4" rx="3.6" fill="none" stroke="#21abf3" stroke-width="2.2"/></g><rect x="7.4" y="6" width="27.6" height="23" rx="4.6" fill="#f6f6f6"/><rect x="9.9" y="8.3" width="22.9" height="18" rx="2.8" fill="none" stroke="#21abf3" stroke-width="2.3"/><circle cx="17.7" cy="14.5" r="2.8" fill="#21abf3"/><path d="M10.4 21.6 L14.6 18.4 Q15.2 18 15.8 18.5 L18.4 21 L24.2 16.4 Q25 15.9 25.8 16.5 L32.4 21.8 V24 Q32.4 26.6 29.8 26.6 H13 Q10.4 26.6 10.4 24 Z" fill="#21abf3"/></svg>
<div class="t" style="left:152.0px;top:1039.0px;height:36px;line-height:36px;font-size:26.52px;color:#383838;letter-spacing:0.27px;-webkit-text-stroke:0.45px #383838;">Assets</div>
<svg class="a" style="left:88.64999999999999px;top:1090.3px;" width="11.3" height="17.6" viewBox="0 0 11.3 17.6"><polyline points="2,2 9.3,8.8 2,15.6" fill="none" stroke="#737373" stroke-width="3.0" stroke-linecap="round" stroke-linejoin="round"/></svg>
<svg class="a" style="left:110.5px;top:1088.0px;" width="29" height="24" viewBox="0 0 29 24"><path fill="#878d93" d="M0 3.4 Q0 0 3.4 0 H8.6 Q10.4 0 11.8 1.2 L12.8 2.1 Q13.8 3 15.4 3 H25.6 Q29 3 29 6.4 V20.6 Q29 24 25.6 24 H3.4 Q0 24 0 20.6 Z"/><rect x="0" y="8" width="29" height="2" fill="#f6f6f6"/></svg>
<div class="t" style="left:152.0px;top:1083.0px;height:36px;line-height:36px;font-size:26.52px;color:#383838;letter-spacing:0.36px;-webkit-text-stroke:0.45px #383838;">Preview Content</div>
<div class="t" style="left:28.4px;top:1150.7px;height:34px;line-height:34px;font-size:25.5px;color:#b6b6b6;letter-spacing:0.54px;font-weight:bold;">Package Dependencies</div>
<svg class="a" style="left:32.35px;top:1198.0px;" width="11.3" height="17.6" viewBox="0 0 11.3 17.6"><polyline points="2,2 9.3,8.8 2,15.6" fill="none" stroke="#737373" stroke-width="3.0" stroke-linecap="round" stroke-linejoin="round"/></svg>
<svg class="a" style="left:56.8px;top:1194.0px;" width="26.4" height="28.2" viewBox="0 0 26.4 28.2"><polygon points="13.2,0.9 25.5,7.6 25.5,20.6 13.2,27.4 0.9,20.6 0.9,7.6" fill="#aa773a" stroke="#aa773a" stroke-width="1.6" stroke-linejoin="round"/><g stroke="#f6f6f6" stroke-width="2" fill="none" stroke-linecap="butt"><path d="M-0.5 6.6 L13.2 14.4 L27 6.6"/><path d="M13.2 14.4 V29"/><path d="M6.3 3 L19.6 10.6"/></g></svg>
<div class="t" style="left:96.0px;top:1190.7px;height:36px;line-height:36px;font-size:26.52px;color:#383838;letter-spacing:0.03px;-webkit-text-stroke:0.45px #383838;">Supabase</div>
<div class="t" style="left:224.0px;top:1190.7px;height:36px;line-height:36px;font-size:26.52px;color:#7b7b7b;letter-spacing:-0.44px;-webkit-text-stroke:0.45px #7b7b7b;">2.13.2</div>
<svg class="a" style="left:32.35px;top:1242.2px;" width="11.3" height="17.6" viewBox="0 0 11.3 17.6"><polyline points="2,2 9.3,8.8 2,15.6" fill="none" stroke="#737373" stroke-width="3.0" stroke-linecap="round" stroke-linejoin="round"/></svg>
<svg class="a" style="left:56.8px;top:1238.2px;" width="26.4" height="28.2" viewBox="0 0 26.4 28.2"><polygon points="13.2,0.9 25.5,7.6 25.5,20.6 13.2,27.4 0.9,20.6 0.9,7.6" fill="#aa773a" stroke="#aa773a" stroke-width="1.6" stroke-linejoin="round"/><g stroke="#f6f6f6" stroke-width="2" fill="none" stroke-linecap="butt"><path d="M-0.5 6.6 L13.2 14.4 L27 6.6"/><path d="M13.2 14.4 V29"/><path d="M6.3 3 L19.6 10.6"/></g></svg>
<div class="t" style="left:96.0px;top:1234.9px;height:36px;line-height:36px;font-size:26.52px;color:#383838;letter-spacing:0.86px;-webkit-text-stroke:0.45px #383838;">swift-concurrency-extras</div>
<div class="t" style="left:411.0px;top:1234.9px;height:36px;line-height:36px;font-size:26.52px;color:#7b7b7b;letter-spacing:-1.58px;-webkit-text-stroke:0.45px #7b7b7b;">1.1.0</div>
<svg class="a" style="left:32.35px;top:1286.4px;" width="11.3" height="17.6" viewBox="0 0 11.3 17.6"><polyline points="2,2 9.3,8.8 2,15.6" fill="none" stroke="#737373" stroke-width="3.0" stroke-linecap="round" stroke-linejoin="round"/></svg>
<svg class="a" style="left:56.8px;top:1282.4px;" width="26.4" height="28.2" viewBox="0 0 26.4 28.2"><polygon points="13.2,0.9 25.5,7.6 25.5,20.6 13.2,27.4 0.9,20.6 0.9,7.6" fill="#aa773a" stroke="#aa773a" stroke-width="1.6" stroke-linejoin="round"/><g stroke="#f6f6f6" stroke-width="2" fill="none" stroke-linecap="butt"><path d="M-0.5 6.6 L13.2 14.4 L27 6.6"/><path d="M13.2 14.4 V29"/><path d="M6.3 3 L19.6 10.6"/></g></svg>
<div class="t" style="left:96.0px;top:1279.1px;height:36px;line-height:36px;font-size:26.52px;color:#383838;letter-spacing:1.24px;-webkit-text-stroke:0.45px #383838;">swift-crypto</div>
<div class="t" style="left:252.4px;top:1279.1px;height:36px;line-height:36px;font-size:26.52px;color:#7b7b7b;letter-spacing:0.12px;-webkit-text-stroke:0.45px #7b7b7b;">3.4.0</div>
<svg class="a" style="left:21px;top:1847px;" width="28" height="28" viewBox="0 0 28 28"><g stroke="#4f4f4f" stroke-width="2.6" stroke-linecap="round"><path d="M13.5 4.4 V22.6"/><path d="M4.4 13.5 H22.6"/></g></svg>
<div class="a" style="left:56px;top:1838px;width:572px;height:44px;background:#e7e7e7;border-radius:13px;box-shadow:inset 0 0 0 1px #d6d6d6;"></div>
<svg class="a" style="left:64px;top:1846px;" width="54" height="28" viewBox="0 0 54 28"><rect x="1.8" y="1.8" width="50" height="24.4" rx="12.2" fill="none" stroke="#6f6f6f" stroke-width="2"/><g stroke="#6f6f6f" stroke-width="2.2" stroke-linecap="round" fill="none"><path d="M10.4 9.4 H24"/><path d="M12.8 14 H21.6"/><path d="M15.2 18.6 H19.2"/><polyline points="33.6,11.6 38,16.2 42.4,11.6" stroke-width="2.5" stroke-linejoin="round"/></g></svg>
<div class="t" style="left:123.2px;top:1842.5px;height:36px;line-height:36px;font-size:26.72px;color:#b4b4b4;letter-spacing:-1.34px;-webkit-text-stroke:0.45px #b4b4b4;">Filter</div>
<svg class="a" style="left:556px;top:1846px;" width="28" height="28" viewBox="0 0 28 28"><circle cx="14" cy="14" r="11.4" fill="none" stroke="#6f6f6f" stroke-width="2"/><path d="M14 7.6 V14.4 H9" fill="none" stroke="#6f6f6f" stroke-width="2" stroke-linecap="round" stroke-linejoin="round"/></svg>
<svg class="a" style="left:590px;top:1846px;" width="28" height="28" viewBox="0 0 28 28"><rect x="1.8" y="1.8" width="24.4" height="24.4" rx="3" fill="none" stroke="#6f6f6f" stroke-width="2"/><g stroke="#6f6f6f" stroke-width="2" stroke-linecap="round"><path d="M6.2 14 H12.6"/><path d="M9.4 10.8 V17.2"/><path d="M16.2 14 H22"/></g></svg>
<svg class="a" style="left:657px;top:90px;" width="30" height="30" viewBox="0 0 30 30"><g fill="none" stroke="#6f6f6f" stroke-width="2.1"><rect x="3" y="3.6" width="9.4" height="9.4"/><rect x="17.4" y="3.6" width="9.4" height="9.4"/><rect x="3" y="17.4" width="9.4" height="9.4"/><rect x="17.4" y="17.4" width="9.4" height="9.4"/></g><g stroke="#6f6f6f" stroke-width="2.1"><path d="M12.4 8.3 H17.4"/><path d="M22.1 13 V17.4"/><path d="M12.4 22.1 H17.4"/><path d="M14.9 8.3 V22.1" opacity="0"/></g></svg>
<div class="a" style="left:703px;top:93.5px;width:2px;height:23px;background:#dedede;"></div>
<svg class="a" style="left:717px;top:89px;" width="24" height="32" viewBox="0 0 24 32"><polyline points="19,3.2 5.4,16 19,28.8" fill="none" stroke="#737373" stroke-width="2.6" stroke-linecap="round" stroke-linejoin="round"/></svg>
<svg class="a" style="left:757px;top:89px;" width="24" height="32" viewBox="0 0 24 32"><polyline points="5,3.2 18.6,16 5,28.8" fill="none" stroke="#b9b9b9" stroke-width="2.6" stroke-linecap="round" stroke-linejoin="round"/></svg>
<div class="a" style="left:795px;top:78px;width:10px;height:54px;background:linear-gradient(90deg,rgba(0,0,0,0.15) 0%,rgba(0,0,0,0.07) 45%,rgba(0,0,0,0) 100%);"></div>
<div class="a" style="left:793px;top:78px;width:2px;height:54px;background:#bfbfbf;"></div>
<div class="a" style="left:825px;top:78px;width:290px;height:54px;background:#d5e3fb;"></div>
<svg class="a" style="left:872.4px;top:93.6px;" width="24" height="22" viewBox="2.3 3.3 18.6 16.6"><defs><linearGradient id="sg15" x1="0" y1="0" x2="0" y2="1"><stop offset="0" stop-color="#f27a3c"/><stop offset="1" stop-color="#ee6233"/></linearGradient></defs><path fill="url(#sg15)" opacity="0.85" d="M13.543 3.41c4.114 2.47 6.545 7.162 5.549 11.131-.024.093-.05.181-.076.272l.002.001c2.062 2.538 1.5 5.258 1.236 4.745-1.072-2.086-3.066-1.568-4.088-1.043a6.803 6.803 0 0 1-.281.158l-.02.012-.002.002c-2.115 1.123-4.957 1.205-7.812-.022a12.568 12.568 0 0 1-5.64-4.838c.649.48 1.35.902 2.097 1.252 3.019 1.414 6.051 1.311 8.197-.002C9.651 12.73 7.101 9.67 5.146 7.191a10.628 10.628 0 0 1-1.005-1.384c2.34 2.142 6.038 4.83 7.365 5.576C8.69 8.408 6.208 4.743 6.324 4.86c4.436 4.47 8.528 6.996 8.528 6.996.154.085.27.154.36.213.085-.215.16-.437.224-.668.708-2.588-.09-5.548-1.893-7.992z"/></svg>
<div class="t" style="left:907.0px;top:88.8px;height:32px;line-height:32px;font-size:22.95px;color:#2f6ff0;letter-spacing:0.12px;-webkit-text-stroke:0.45px #2f6ff0;">EnrolmentsView</div>
<svg class="a" style="left:1162.7px;top:93.6px;" width="24" height="22" viewBox="2.3 3.3 18.6 16.6"><defs><linearGradient id="sg16" x1="0" y1="0" x2="0" y2="1"><stop offset="0" stop-color="#f27a3c"/><stop offset="1" stop-color="#ee6233"/></linearGradient></defs><path fill="url(#sg16)" opacity="0.85" d="M13.543 3.41c4.114 2.47 6.545 7.162 5.549 11.131-.024.093-.05.181-.076.272l.002.001c2.062 2.538 1.5 5.258 1.236 4.745-1.072-2.086-3.066-1.568-4.088-1.043a6.803 6.803 0 0 1-.281.158l-.02.012-.002.002c-2.115 1.123-4.957 1.205-7.812-.022a12.568 12.568 0 0 1-5.64-4.838c.649.48 1.35.902 2.097 1.252 3.019 1.414 6.051 1.311 8.197-.002C9.651 12.73 7.101 9.67 5.146 7.191a10.628 10.628 0 0 1-1.005-1.384c2.34 2.142 6.038 4.83 7.365 5.576C8.69 8.408 6.208 4.743 6.324 4.86c4.436 4.47 8.528 6.996 8.528 6.996.154.085.27.154.36.213.085-.215.16-.437.224-.668.708-2.588-.09-5.548-1.893-7.992z"/></svg>
<div class="t" style="left:1197.0px;top:88.8px;height:32px;line-height:32px;font-size:22.95px;color:#262626;letter-spacing:0.08px;-webkit-text-stroke:0.45px #262626;">EnrolmentsByCourseView</div>
<svg class="a" style="left:1554.8px;top:93.6px;" width="24" height="22" viewBox="2.3 3.3 18.6 16.6"><defs><linearGradient id="sg17" x1="0" y1="0" x2="0" y2="1"><stop offset="0" stop-color="#f27a3c"/><stop offset="1" stop-color="#ee6233"/></linearGradient></defs><path fill="url(#sg17)" opacity="0.85" d="M13.543 3.41c4.114 2.47 6.545 7.162 5.549 11.131-.024.093-.05.181-.076.272l.002.001c2.062 2.538 1.5 5.258 1.236 4.745-1.072-2.086-3.066-1.568-4.088-1.043a6.803 6.803 0 0 1-.281.158l-.02.012-.002.002c-2.115 1.123-4.957 1.205-7.812-.022a12.568 12.568 0 0 1-5.64-4.838c.649.48 1.35.902 2.097 1.252 3.019 1.414 6.051 1.311 8.197-.002C9.651 12.73 7.101 9.67 5.146 7.191a10.628 10.628 0 0 1-1.005-1.384c2.34 2.142 6.038 4.83 7.365 5.576C8.69 8.408 6.208 4.743 6.324 4.86c4.436 4.47 8.528 6.996 8.528 6.996.154.085.27.154.36.213.085-.215.16-.437.224-.668.708-2.588-.09-5.548-1.893-7.992z"/></svg>
<div class="t" style="left:1589.0px;top:88.8px;height:32px;line-height:32px;font-size:22.95px;color:#262626;letter-spacing:0.05px;-webkit-text-stroke:0.45px #262626;">Enrolments…StudentView</div>
<svg class="a" style="left:1946.7px;top:93.6px;" width="24" height="22" viewBox="2.3 3.3 18.6 16.6"><defs><linearGradient id="sg18" x1="0" y1="0" x2="0" y2="1"><stop offset="0" stop-color="#f27a3c"/><stop offset="1" stop-color="#ee6233"/></linearGradient></defs><path fill="url(#sg18)" opacity="0.85" d="M13.543 3.41c4.114 2.47 6.545 7.162 5.549 11.131-.024.093-.05.181-.076.272l.002.001c2.062 2.538 1.5 5.258 1.236 4.745-1.072-2.086-3.066-1.568-4.088-1.043a6.803 6.803 0 0 1-.281.158l-.02.012-.002.002c-2.115 1.123-4.957 1.205-7.812-.022a12.568 12.568 0 0 1-5.64-4.838c.649.48 1.35.902 2.097 1.252 3.019 1.414 6.051 1.311 8.197-.002C9.651 12.73 7.101 9.67 5.146 7.191a10.628 10.628 0 0 1-1.005-1.384c2.34 2.142 6.038 4.83 7.365 5.576C8.69 8.408 6.208 4.743 6.324 4.86c4.436 4.47 8.528 6.996 8.528 6.996.154.085.27.154.36.213.085-.215.16-.437.224-.668.708-2.588-.09-5.548-1.893-7.992z"/></svg>
<div class="t" style="left:1980.8px;top:88.8px;height:32px;line-height:32px;font-size:22.95px;color:#262626;letter-spacing:0.27px;-webkit-text-stroke:0.45px #262626;">CoursesListView</div>
<svg class="a" style="left:2245px;top:93.6px;" width="24" height="22" viewBox="2.3 3.3 18.6 16.6"><defs><linearGradient id="sg19" x1="0" y1="0" x2="0" y2="1"><stop offset="0" stop-color="#f27a3c"/><stop offset="1" stop-color="#ee6233"/></linearGradient></defs><path fill="url(#sg19)" opacity="0.85" d="M13.543 3.41c4.114 2.47 6.545 7.162 5.549 11.131-.024.093-.05.181-.076.272l.002.001c2.062 2.538 1.5 5.258 1.236 4.745-1.072-2.086-3.066-1.568-4.088-1.043a6.803 6.803 0 0 1-.281.158l-.02.012-.002.002c-2.115 1.123-4.957 1.205-7.812-.022a12.568 12.568 0 0 1-5.64-4.838c.649.48 1.35.902 2.097 1.252 3.019 1.414 6.051 1.311 8.197-.002C9.651 12.73 7.101 9.67 5.146 7.191a10.628 10.628 0 0 1-1.005-1.384c2.34 2.142 6.038 4.83 7.365 5.576C8.69 8.408 6.208 4.743 6.324 4.86c4.436 4.47 8.528 6.996 8.528 6.996.154.085.27.154.36.213.085-.215.16-.437.224-.668.708-2.588-.09-5.548-1.893-7.992z"/></svg>
<div class="t" style="left:2279.0px;top:88.8px;height:32px;line-height:32px;font-size:22.95px;color:#262626;letter-spacing:0.07px;-webkit-text-stroke:0.45px #262626;">AddCourseView</div>
<svg class="a" style="left:2532.6px;top:93.6px;" width="24" height="22" viewBox="2.3 3.3 18.6 16.6"><defs><linearGradient id="sg20" x1="0" y1="0" x2="0" y2="1"><stop offset="0" stop-color="#f27a3c"/><stop offset="1" stop-color="#ee6233"/></linearGradient></defs><path fill="url(#sg20)" opacity="0.85" d="M13.543 3.41c4.114 2.47 6.545 7.162 5.549 11.131-.024.093-.05.181-.076.272l.002.001c2.062 2.538 1.5 5.258 1.236 4.745-1.072-2.086-3.066-1.568-4.088-1.043a6.803 6.803 0 0 1-.281.158l-.02.012-.002.002c-2.115 1.123-4.957 1.205-7.812-.022a12.568 12.568 0 0 1-5.64-4.838c.649.48 1.35.902 2.097 1.252 3.019 1.414 6.051 1.311 8.197-.002C9.651 12.73 7.101 9.67 5.146 7.191a10.628 10.628 0 0 1-1.005-1.384c2.34 2.142 6.038 4.83 7.365 5.576C8.69 8.408 6.208 4.743 6.324 4.86c4.436 4.47 8.528 6.996 8.528 6.996.154.085.27.154.36.213.085-.215.16-.437.224-.668.708-2.588-.09-5.548-1.893-7.992z"/></svg>
<div class="t" style="left:2566.7px;top:88.8px;height:32px;line-height:32px;font-size:22.95px;color:#262626;letter-spacing:0.13px;-webkit-text-stroke:0.45px #262626;">Course</div>
<div class="a" style="left:1505px;top:93.5px;width:2px;height:23px;background:#e2e2e2;"></div>
<div class="a" style="left:1896.8px;top:93.5px;width:2px;height:23px;background:#e2e2e2;"></div>
<div class="a" style="left:2195px;top:93.5px;width:2px;height:23px;background:#e2e2e2;"></div>
<div class="a" style="left:2482.9px;top:93.5px;width:2px;height:23px;background:#e2e2e2;"></div>
<div class="a" style="left:2681px;top:93.5px;width:2px;height:23px;background:#e2e2e2;"></div>
<svg class="a" style="left:2731px;top:93.6px;" width="24" height="22" viewBox="2.3 3.3 18.6 16.6"><defs><linearGradient id="sg21" x1="0" y1="0" x2="0" y2="1"><stop offset="0" stop-color="#f27a3c"/><stop offset="1" stop-color="#ee6233"/></linearGradient></defs><path fill="url(#sg21)" opacity="0.85" d="M13.543 3.41c4.114 2.47 6.545 7.162 5.549 11.131-.024.093-.05.181-.076.272l.002.001c2.062 2.538 1.5 5.258 1.236 4.745-1.072-2.086-3.066-1.568-4.088-1.043a6.803 6.803 0 0 1-.281.158l-.02.012-.002.002c-2.115 1.123-4.957 1.205-7.812-.022a12.568 12.568 0 0 1-5.64-4.838c.649.48 1.35.902 2.097 1.252 3.019 1.414 6.051 1.311 8.197-.002C9.651 12.73 7.101 9.67 5.146 7.191a10.628 10.628 0 0 1-1.005-1.384c2.34 2.142 6.038 4.83 7.365 5.576C8.69 8.408 6.208 4.743 6.324 4.86c4.436 4.47 8.528 6.996 8.528 6.996.154.085.27.154.36.213.085-.215.16-.437.224-.668.708-2.588-.09-5.548-1.893-7.992z"/></svg>
<div class="a" style="left:2760px;top:78px;width:83.5px;height:54px;overflow:hidden;">
<div class="t" style="left:5.4px;top:10.8px;height:32px;line-height:32px;font-size:22.95px;color:#262626;letter-spacing:0.10px;-webkit-text-stroke:0.45px #262626;">CoursesListViewModel</div>
</div>
<div class="a" style="left:2832px;top:78px;width:10px;height:54px;background:linear-gradient(90deg,rgba(0,0,0,0) 0%,rgba(0,0,0,0.07) 55%,rgba(0,0,0,0.17) 100%);"></div>
<div class="a" style="left:2842px;top:78px;width:2px;height:54px;background:#bfbfbf;"></div>
<div class="a" style="left:2844.5px;top:78px;width:180px;height:54px;background:#fff;"></div>
<svg class="a" style="left:2857px;top:89px;" width="30" height="32" viewBox="0 0 30 32"><g fill="none" stroke="#7a7a7a" stroke-width="2.2" stroke-linecap="round" stroke-linejoin="round"><path d="M6.4 10 H25.4"/><polyline points="19.2,3.8 25.6,10 19.2,16.2"/><path d="M24.4 22 H4.6"/><polyline points="10.8,15.8 4.4,22 10.8,28.2"/></g></svg>
<svg class="a" style="left:2904px;top:89px;" width="40" height="32" viewBox="0 0 40 32"><g stroke="#7a7a7a" stroke-width="2.1" fill="none"><path d="M2 4.4 H13.6"/><path d="M2 10.4 H17.6"/><path d="M2 16.4 H13.6"/><path d="M2 22.4 H17.6"/><path d="M2 28 H17.6"/><rect x="22.4" y="4.2" width="14.6" height="23.8"/><rect x="27" y="8.6" width="5.4" height="15" stroke-width="1.9"/></g></svg>
<div class="a" style="left:2960px;top:94px;width:2px;height:23px;background:#e2e2e2;"></div>
<svg class="a" style="left:2978px;top:89px;" width="30" height="32" viewBox="0 0 30 32"><g fill="none" stroke="#7a7a7a" stroke-width="2.2" stroke-linecap="round"><rect x="3.4" y="4.2" width="23.4" height="23.2" rx="4.2"/><path d="M11 4.2 V27.4"/><path d="M15.2 15.8 H22.8"/><path d="M19 12 V19.6"/></g></svg>
<svg class="a" style="left:658.2px;top:147.8px;" width="25" height="25" viewBox="0 0 29 29"><rect x="0" y="0" width="29" height="29" rx="6.4" fill="#2a7af2"/><rect x="2.6" y="2.6" width="23.8" height="23.8" rx="4.2" fill="none" stroke="#fff" stroke-width="1.5" opacity="0.95"/><g stroke="#fff" stroke-width="2.1" stroke-linecap="round" fill="none"><path d="M9.2 20.6 L16.2 8.4"/><path d="M13.1 8.4 L20.2 20.6"/><path d="M7 17.4 H22"/></g></svg>
<div class="t" style="left:695.0px;top:145.2px;height:32px;line-height:32px;font-size:22.95px;color:#262626;letter-spacing:0.30px;-webkit-text-stroke:0.45px #262626;">StudentsAndCourses</div>
<svg class="a" style="left:927px;top:150px;" width="9" height="22" viewBox="0 0 9 22"><polyline points="1.6,2.4 6.2,11 1.6,19.6" fill="none" stroke="#8c8c8c" stroke-width="2.5" stroke-linecap="round" stroke-linejoin="round"/></svg>
<svg class="a" style="left:952.4px;top:150.2px;" width="24.6" height="19.6" viewBox="0 0 29 24"><path fill="#878d93" d="M0 3.4 Q0 0 3.4 0 H8.6 Q10.4 0 11.8 1.2 L12.8 2.1 Q13.8 3 15.4 3 H25.6 Q29 3 29 6.4 V20.6 Q29 24 25.6 24 H3.4 Q0 24 0 20.6 Z"/><rect x="0" y="8" width="29" height="2" fill="#fff"/></svg>
<div class="t" style="left:989.0px;top:145.2px;height:32px;line-height:32px;font-size:22.95px;color:#262626;letter-spacing:0.29px;-webkit-text-stroke:0.45px #262626;">StudentsAndCourses</div>
<svg class="a" style="left:1221px;top:150px;" width="9" height="22" viewBox="0 0 9 22"><polyline points="1.6,2.4 6.2,11 1.6,19.6" fill="none" stroke="#8c8c8c" stroke-width="2.5" stroke-linecap="round" stroke-linejoin="round"/></svg>
<svg class="a" style="left:1246.4px;top:150.2px;" width="24.6" height="19.6" viewBox="0 0 29 24"><path fill="#878d93" d="M0 3.4 Q0 0 3.4 0 H8.6 Q10.4 0 11.8 1.2 L12.8 2.1 Q13.8 3 15.4 3 H25.6 Q29 3 29 6.4 V20.6 Q29 24 25.6 24 H3.4 Q0 24 0 20.6 Z"/><rect x="0" y="8" width="29" height="2" fill="#fff"/></svg>
<div class="t" style="left:1283.4px;top:145.2px;height:32px;line-height:32px;font-size:22.95px;color:#262626;letter-spacing:0.04px;-webkit-text-stroke:0.45px #262626;">Views</div>
<svg class="a" style="left:1355.2px;top:150px;" width="9" height="22" viewBox="0 0 9 22"><polyline points="1.6,2.4 6.2,11 1.6,19.6" fill="none" stroke="#8c8c8c" stroke-width="2.5" stroke-linecap="round" stroke-linejoin="round"/></svg>
<svg class="a" style="left:1381px;top:150px;" width="24" height="21.5" viewBox="2.3 3.3 18.6 16.6"><defs><linearGradient id="sg22" x1="0" y1="0" x2="0" y2="1"><stop offset="0" stop-color="#f27a3c"/><stop offset="1" stop-color="#ee6233"/></linearGradient></defs><path fill="url(#sg22)" opacity="1" d="M13.543 3.41c4.114 2.47 6.545 7.162 5.549 11.131-.024.093-.05.181-.076.272l.002.001c2.062 2.538 1.5 5.258 1.236 4.745-1.072-2.086-3.066-1.568-4.088-1.043a6.803 6.803 0 0 1-.281.158l-.02.012-.002.002c-2.115 1.123-4.957 1.205-7.812-.022a12.568 12.568 0 0 1-5.64-4.838c.649.48 1.35.902 2.097 1.252 3.019 1.414 6.051 1.311 8.197-.002C9.651 12.73 7.101 9.67 5.146 7.191a10.628 10.628 0 0 1-1.005-1.384c2.34 2.142 6.038 4.83 7.365 5.576C8.69 8.408 6.208 4.743 6.324 4.86c4.436 4.47 8.528 6.996 8.528 6.996.154.085.27.154.36.213.085-.215.16-.437.224-.668.708-2.588-.09-5.548-1.893-7.992z"/></svg>
<div class="t" style="left:1417.2px;top:145.2px;height:32px;line-height:32px;font-size:22.95px;color:#262626;letter-spacing:0.08px;-webkit-text-stroke:0.45px #262626;">EnrolmentsView</div>
<svg class="a" style="left:1595px;top:150px;" width="9" height="22" viewBox="0 0 9 22"><polyline points="1.6,2.4 6.2,11 1.6,19.6" fill="none" stroke="#8c8c8c" stroke-width="2.5" stroke-linecap="round" stroke-linejoin="round"/></svg>
<svg class="a" style="left:1619px;top:146px;" width="28" height="28" viewBox="0 0 28 28"><rect x="0" y="0" width="28" height="28" rx="6.8" fill="#54bbd6"/><g transform="translate(14.2 0) scale(0.82 1)"><text x="0" y="22" text-anchor="middle" font-family="Liberation Sans, sans-serif" font-size="22.5" fill="#fff" stroke="#fff" stroke-width="0.9">P</text></g></svg>
<div class="t" style="left:1657.0px;top:145.2px;height:32px;line-height:32px;font-size:22.95px;color:#262626;letter-spacing:0.79px;-webkit-text-stroke:0.45px #262626;">body</div>
<div class="a" style="left:1148px;top:790px;width:444.8px;height:40px;background:#b8d6fb;"></div>
<div class="a" style="left:1148px;top:1030px;width:463.4px;height:40px;background:#b8d6fb;"></div>
<div class="t" style="right:2294.5px;top:191.6px;height:39px;line-height:39px;font-size:30px;color:#a6a6a6;letter-spacing:0.00px;transform:scaleX(0.88);transform-origin:100% 50%;-webkit-text-stroke:0.5px #a6a6a6;">1</div>
<div class="c" style="top:192.0px"><span class="cm">//</span></div>
<div class="t" style="right:2294.5px;top:231.6px;height:39px;line-height:39px;font-size:30px;color:#a6a6a6;letter-spacing:0.00px;transform:scaleX(0.88);transform-origin:100% 50%;-webkit-text-stroke:0.5px #a6a6a6;">2</div>
<div class="c" style="top:232.0px"><span class="cm">//  EnrolmentsView.swift</span></div>
<div class="t" style="right:2294.5px;top:271.6px;height:39px;line-height:39px;font-size:30px;color:#a6a6a6;letter-spacing:0.00px;transform:scaleX(0.88);transform-origin:100% 50%;-webkit-text-stroke:0.5px #a6a6a6;">3</div>
<div class="c" style="top:272.0px"><span class="cm">//  StudentsAndCourses</span></div>
<div class="t" style="right:2294.5px;top:311.6px;height:39px;line-height:39px;font-size:30px;color:#a6a6a6;letter-spacing:0.00px;transform:scaleX(0.88);transform-origin:100% 50%;-webkit-text-stroke:0.5px #a6a6a6;">4</div>
<div class="c" style="top:312.0px"><span class="cm">//</span></div>
<div class="t" style="right:2294.5px;top:351.6px;height:39px;line-height:39px;font-size:30px;color:#a6a6a6;letter-spacing:0.00px;transform:scaleX(0.88);transform-origin:100% 50%;-webkit-text-stroke:0.5px #a6a6a6;">5</div>
<div class="c" style="top:352.0px"><span class="cm">//  Created by Russell Gordon on 2024-06-09.</span></div>
<div class="t" style="right:2294.5px;top:391.6px;height:39px;line-height:39px;font-size:30px;color:#a6a6a6;letter-spacing:0.00px;transform:scaleX(0.88);transform-origin:100% 50%;-webkit-text-stroke:0.5px #a6a6a6;">6</div>
<div class="c" style="top:392.0px"><span class="cm">//</span></div>
<div class="t" style="right:2294.5px;top:431.6px;height:39px;line-height:39px;font-size:30px;color:#a6a6a6;letter-spacing:0.00px;transform:scaleX(0.88);transform-origin:100% 50%;-webkit-text-stroke:0.5px #a6a6a6;">7</div>
<div class="t" style="right:2294.5px;top:471.6px;height:39px;line-height:39px;font-size:30px;color:#a6a6a6;letter-spacing:0.00px;transform:scaleX(0.88);transform-origin:100% 50%;-webkit-text-stroke:0.5px #a6a6a6;">8</div>
<div class="c" style="top:472.0px"><b class="k">import</b> SwiftUI</div>
<div class="t" style="right:2294.5px;top:511.6px;height:39px;line-height:39px;font-size:30px;color:#a6a6a6;letter-spacing:0.00px;transform:scaleX(0.88);transform-origin:100% 50%;-webkit-text-stroke:0.5px #a6a6a6;">9</div>
<div class="t" style="right:2294.5px;top:551.6px;height:39px;line-height:39px;font-size:30px;color:#a6a6a6;letter-spacing:0.00px;transform:scaleX(0.88);transform-origin:100% 50%;-webkit-text-stroke:0.5px #a6a6a6;">10</div>
<div class="c" style="top:552.0px"><b class="k">struct</b> <span class="ty">EnrolmentsView</span>: <span class="oc">View</span> {</div>
<div class="t" style="right:2294.5px;top:591.6px;height:39px;line-height:39px;font-size:30px;color:#a6a6a6;letter-spacing:0.00px;transform:scaleX(0.88);transform-origin:100% 50%;-webkit-text-stroke:0.5px #a6a6a6;">11</div>
<div class="c" style="top:592.0px">    <b class="k">var</b> <span class="od">body</span>: <b class="k">some</b> <span class="oc">View</span> {</div>
<div class="t" style="right:2294.5px;top:631.6px;height:39px;line-height:39px;font-size:30px;color:#a6a6a6;letter-spacing:0.00px;transform:scaleX(0.88);transform-origin:100% 50%;-webkit-text-stroke:0.5px #a6a6a6;">12</div>
<div class="c" style="top:632.0px">        <span class="oc">NavigationStack</span> {</div>
<div class="t" style="right:2294.5px;top:671.6px;height:39px;line-height:39px;font-size:30px;color:#a6a6a6;letter-spacing:0.00px;transform:scaleX(0.88);transform-origin:100% 50%;-webkit-text-stroke:0.5px #a6a6a6;">13</div>
<div class="c" style="top:672.0px">            <span class="oc">List</span> {</div>
<div class="t" style="right:2294.5px;top:711.6px;height:39px;line-height:39px;font-size:30px;color:#a6a6a6;letter-spacing:0.00px;transform:scaleX(0.88);transform-origin:100% 50%;-webkit-text-stroke:0.5px #a6a6a6;">14</div>
<div class="t" style="right:2294.5px;top:751.6px;height:39px;line-height:39px;font-size:30px;color:#a6a6a6;letter-spacing:0.00px;transform:scaleX(0.88);transform-origin:100% 50%;-webkit-text-stroke:0.5px #a6a6a6;">15</div>
<div class="c" style="top:752.0px">                <span class="oc">NavigationLink</span> {</div>
<div class="t" style="right:2294.5px;top:791.6px;height:39px;line-height:39px;font-size:30px;color:#1c1c1c;letter-spacing:0.00px;transform:scaleX(0.88);transform-origin:100% 50%;-webkit-text-stroke:0.7px #1c1c1c;">16</div>
<div class="c" style="top:792.0px">                    <span class="pc">EnrolmentsByCourseView</span>()</div>
<div class="t" style="right:2294.5px;top:831.6px;height:39px;line-height:39px;font-size:30px;color:#a6a6a6;letter-spacing:0.00px;transform:scaleX(0.88);transform-origin:100% 50%;-webkit-text-stroke:0.5px #a6a6a6;">17</div>
<div class="c" style="top:832.0px">                } <span class="of">label</span>: {</div>
<div class="t" style="right:2294.5px;top:871.6px;height:39px;line-height:39px;font-size:30px;color:#a6a6a6;letter-spacing:0.00px;transform:scaleX(0.88);transform-origin:100% 50%;-webkit-text-stroke:0.5px #a6a6a6;">18</div>
<div class="c" style="top:872.0px">                    <span class="oc">Text</span>(<span class="s">"By course"</span>)</div>
<div class="t" style="right:2294.5px;top:911.6px;height:39px;line-height:39px;font-size:30px;color:#a6a6a6;letter-spacing:0.00px;transform:scaleX(0.88);transform-origin:100% 50%;-webkit-text-stroke:0.5px #a6a6a6;">19</div>
<div class="c" style="top:912.0px">                }</div>
<div class="t" style="right:2294.5px;top:951.6px;height:39px;line-height:39px;font-size:30px;color:#a6a6a6;letter-spacing:0.00px;transform:scaleX(0.88);transform-origin:100% 50%;-webkit-text-stroke:0.5px #a6a6a6;">20</div>
<div class="t" style="right:2294.5px;top:991.6px;height:39px;line-height:39px;font-size:30px;color:#a6a6a6;letter-spacing:0.00px;transform:scaleX(0.88);transform-origin:100% 50%;-webkit-text-stroke:0.5px #a6a6a6;">21</div>
<div class="c" style="top:992.0px">                <span class="oc">NavigationLink</span> {</div>
<div class="t" style="right:2294.5px;top:1031.6px;height:39px;line-height:39px;font-size:30px;color:#1c1c1c;letter-spacing:0.00px;transform:scaleX(0.88);transform-origin:100% 50%;-webkit-text-stroke:0.7px #1c1c1c;">22</div>
<div class="c" style="top:1032.0px">                    <span class="pc">EnrolmentsByStudentView</span>()</div>
<div class="t" style="right:2294.5px;top:1071.6px;height:39px;line-height:39px;font-size:30px;color:#a6a6a6;letter-spacing:0.00px;transform:scaleX(0.88);transform-origin:100% 50%;-webkit-text-stroke:0.5px #a6a6a6;">23</div>
<div class="c" style="top:1072.0px">                } <span class="of">label</span>: {</div>
<div class="t" style="right:2294.5px;top:1111.6px;height:39px;line-height:39px;font-size:30px;color:#a6a6a6;letter-spacing:0.00px;transform:scaleX(0.88);transform-origin:100% 50%;-webkit-text-stroke:0.5px #a6a6a6;">24</div>
<div class="c" style="top:1112.0px">                    <span class="oc">Text</span>(<span class="s">"By student"</span>)</div>
<div class="t" style="right:2294.5px;top:1151.6px;height:39px;line-height:39px;font-size:30px;color:#a6a6a6;letter-spacing:0.00px;transform:scaleX(0.88);transform-origin:100% 50%;-webkit-text-stroke:0.5px #a6a6a6;">25</div>
<div class="c" style="top:1152.0px">                }</div>
<div class="t" style="right:2294.5px;top:1191.6px;height:39px;line-height:39px;font-size:30px;color:#a6a6a6;letter-spacing:0.00px;transform:scaleX(0.88);transform-origin:100% 50%;-webkit-text-stroke:0.5px #a6a6a6;">26</div>
<div class="t" style="right:2294.5px;top:1231.6px;height:39px;line-height:39px;font-size:30px;color:#a6a6a6;letter-spacing:0.00px;transform:scaleX(0.88);transform-origin:100% 50%;-webkit-text-stroke:0.5px #a6a6a6;">27</div>
<div class="c" style="top:1232.0px">            }</div>
<div class="t" style="right:2294.5px;top:1271.6px;height:39px;line-height:39px;font-size:30px;color:#a6a6a6;letter-spacing:0.00px;transform:scaleX(0.88);transform-origin:100% 50%;-webkit-text-stroke:0.5px #a6a6a6;">28</div>
<div class="c" style="top:1272.0px">            .<span class="of">navigationTitle</span>(<span class="s">"Enrolments"</span>)</div>
<div class="t" style="right:2294.5px;top:1311.6px;height:39px;line-height:39px;font-size:30px;color:#a6a6a6;letter-spacing:0.00px;transform:scaleX(0.88);transform-origin:100% 50%;-webkit-text-stroke:0.5px #a6a6a6;">29</div>
<div class="c" style="top:1312.0px">        }</div>
<div class="t" style="right:2294.5px;top:1351.6px;height:39px;line-height:39px;font-size:30px;color:#a6a6a6;letter-spacing:0.00px;transform:scaleX(0.88);transform-origin:100% 50%;-webkit-text-stroke:0.5px #a6a6a6;">30</div>
<div class="c" style="top:1352.0px">    }</div>
<div class="t" style="right:2294.5px;top:1391.6px;height:39px;line-height:39px;font-size:30px;color:#a6a6a6;letter-spacing:0.00px;transform:scaleX(0.88);transform-origin:100% 50%;-webkit-text-stroke:0.5px #a6a6a6;">31</div>
<div class="c" style="top:1392.0px">}</div>
<div class="t" style="right:2294.5px;top:1431.6px;height:39px;line-height:39px;font-size:30px;color:#a6a6a6;letter-spacing:0.00px;transform:scaleX(0.88);transform-origin:100% 50%;-webkit-text-stroke:0.5px #a6a6a6;">32</div>
<div class="t" style="right:2294.5px;top:1471.6px;height:39px;line-height:39px;font-size:30px;color:#a6a6a6;letter-spacing:0.00px;transform:scaleX(0.88);transform-origin:100% 50%;-webkit-text-stroke:0.5px #a6a6a6;">33</div>
<div class="c" style="top:1472.0px"><span class="of">#Preview</span> {</div>
<div class="t" style="right:2294.5px;top:1511.6px;height:39px;line-height:39px;font-size:30px;color:#a6a6a6;letter-spacing:0.00px;transform:scaleX(0.88);transform-origin:100% 50%;-webkit-text-stroke:0.5px #a6a6a6;">34</div>
<div class="c" style="top:1512.0px">    <span class="pc">EnrolmentsView</span>()</div>
<div class="t" style="right:2294.5px;top:1551.6px;height:39px;line-height:39px;font-size:30px;color:#a6a6a6;letter-spacing:0.00px;transform:scaleX(0.88);transform-origin:100% 50%;-webkit-text-stroke:0.5px #a6a6a6;">35</div>
<div class="c" style="top:1552.0px">}</div>
<div class="t" style="right:2294.5px;top:1591.6px;height:39px;line-height:39px;font-size:30px;color:#a6a6a6;letter-spacing:0.00px;transform:scaleX(0.88);transform-origin:100% 50%;-webkit-text-stroke:0.5px #a6a6a6;">36</div>
<div class="a" style="left:739px;top:192.5px;width:14px;height:234.5px;background:#e6e6e6;border-radius:7px 7px 7px 7px;box-shadow:0 0 0 1px rgba(255,255,255,0.5);"></div>
<div class="a" style="left:739px;top:552.2px;width:14px;height:874.8px;background:#e6e6e6;border-radius:7px 7px 7px 7px;box-shadow:0 0 0 1px rgba(255,255,255,0.5);"></div>
<div class="a" style="left:739px;top:591px;width:14px;height:797px;background:#d0d0d0;border-radius:7px 7px 7px 7px;box-shadow:0 0 0 1px rgba(255,255,255,0.5);"></div>
<div class="a" style="left:739px;top:631px;width:14px;height:717px;background:#bebebe;border-radius:7px 7px 7px 7px;box-shadow:0 0 0 1px rgba(255,255,255,0.5);"></div>
<div class="a" style="left:739px;top:671px;width:14px;height:597.5px;background:#adadad;border-radius:7px 7px 7px 7px;box-shadow:0 0 0 1px rgba(255,255,255,0.5);"></div>
<div class="a" style="left:739px;top:751px;width:14px;height:197px;background:#9b9b9b;border-radius:7px 7px 7px 7px;box-shadow:0 0 0 1px rgba(255,255,255,0.5);"></div>
<div class="a" style="left:739px;top:851px;width:14px;height:1.6px;background:#e9e9e9;"></div>
<div class="a" style="left:739px;top:991.5px;width:14px;height:197.0px;background:#9b9b9b;border-radius:7px 7px 7px 7px;box-shadow:0 0 0 1px rgba(255,255,255,0.5);"></div>
<div class="a" style="left:739px;top:1090px;width:14px;height:1.6px;background:#e9e9e9;"></div>
<div class="a" style="left:739px;top:1472.5px;width:14px;height:115.0px;background:#e6e6e6;border-radius:7px 7px 7px 7px;box-shadow:0 0 0 1px rgba(255,255,255,0.5);"></div>
<div class="a" style="left:651px;top:630px;width:10px;height:679px;background:#b0cbfb;border-radius:5px;box-shadow:inset 0 0 0 2px #3576f4;"></div>
<div class="a" style="left:651px;top:1346px;width:10px;height:10px;background:#dbe7fd;border-radius:50%;box-shadow:inset 0 0 0 2px #3576f4;"></div>
<div class="a" style="left:2280px;top:190px;width:1.5px;height:1642px;background:#e4e4e4;"></div>
<div class="a" style="left:2281.5px;top:190px;width:27px;height:1642px;background:#fafafa;"></div>
<div class="a" style="left:2308.5px;top:190px;width:1.5px;height:1642px;background:#e4e4e4;"></div>
<div class="a" style="left:2287px;top:197px;width:16px;height:1223px;background:linear-gradient(90deg,#787878,#858585);border-radius:8px;"></div>
<div class="a" style="left:2310px;top:190px;width:714px;height:1642px;background:#f0f0f0;"></div>
<div class="a" style="left:2335px;top:214px;width:63px;height:52px;background:#fff;border-radius:14px;box-shadow:0 2px 7px rgba(0,0,0,0.13),0 0 1.5px rgba(0,0,0,0.22);"></div>
<svg class="a" style="left:2353px;top:222px;" width="26" height="36" viewBox="0 0 26 36"><g fill="none" stroke="#4a4a4a" stroke-width="2.2" stroke-linecap="round" stroke-linejoin="round"><path d="M4.9 4.2 H21.1"/><path d="M5.4 4.6 Q7 7.2 9.7 8.3 L9.2 14.6"/><path d="M20.6 4.6 Q19 7.2 16.3 8.3 L16.8 14.6"/><path d="M3.6 21.8 C4 17 8 14.3 13 14.3 C18 14.3 22 17 22.4 21.8 Z"/><path d="M13 22 V32"/></g></svg>
<div class="a" style="left:2418px;top:214px;width:236px;height:52px;background:#cddcfb;border-radius:14px;box-shadow:0 2px 7px rgba(0,0,0,0.13),0 0 1.5px rgba(0,0,0,0.22);"></div>
<svg class="a" style="left:2434px;top:225px;" width="26" height="28" viewBox="0 0 26 28"><g fill="none" stroke="#3478f6" stroke-width="2.1" stroke-linecap="round"><rect x="2.6" y="9.4" width="20.4" height="16" rx="3.2"/><path d="M5.2 5.6 H20.4" stroke-width="1.7"/><path d="M7.8 2.6 H17.8" stroke-width="1.5"/></g></svg>
<div class="t" style="left:2471.0px;top:224.0px;height:32px;line-height:32px;font-size:22.95px;color:#3478f6;letter-spacing:-0.04px;-webkit-text-stroke:0.45px #3478f6;">EnrolmentsView</div>
<div class="a" style="left:2342px;top:587px;width:10px;height:49px;background:#2b2b2b;border-radius:3px;"></div>
<div class="a" style="left:2342px;top:679px;width:10px;height:92px;background:#2b2b2b;border-radius:3px;"></div>
<div class="a" style="left:2342px;top:796px;width:10px;height:92px;background:#2b2b2b;border-radius:3px;"></div>
<div class="a" style="left:2984px;top:740px;width:8px;height:148px;background:#2b2b2b;border-radius:3px;"></div>
<svg class="a" style="left:2348px;top:346px;" width="640" height="1329" viewBox="0 0 640 1329"><path d="M165.57 2.00 L474.43 2.00 C521.53 2.00 545.08 2.00 570.43 10.02 C598.11 20.09 619.91 41.89 629.98 69.57 C638.00 94.92 638.00 118.47 638.00 165.57 L638.00 1163.43 C638.00 1210.53 638.00 1234.08 629.98 1259.43 C619.91 1287.11 598.11 1308.91 570.43 1318.98 C545.08 1327.00 521.53 1327.00 474.43 1327.00 L165.57 1327.00 C118.47 1327.00 94.92 1327.00 69.57 1318.98 C41.89 1308.91 20.09 1287.11 10.02 1259.43 C2.00 1234.08 2.00 1210.53 2.00 1163.43 L2.00 165.57 C2.00 118.47 2.00 94.92 10.02 69.57 C20.09 41.89 41.89 20.09 69.57 10.02 C94.92 2.00 118.47 2.00 165.57 2.00Z" fill="#2e2e2e" stroke="rgba(0,0,0,0.25)" stroke-width="1.2"/><path d="M161.84 10.50 L478.16 10.50 C521.74 10.50 543.53 10.50 566.98 17.92 C592.59 27.24 612.76 47.41 622.08 73.02 C629.50 96.47 629.50 118.26 629.50 161.84 L629.50 1167.16 C629.50 1210.74 629.50 1232.53 622.08 1255.98 C612.76 1281.59 592.59 1301.76 566.98 1311.08 C543.53 1318.50 521.74 1318.50 478.16 1318.50 L161.84 1318.50 C118.26 1318.50 96.47 1318.50 73.02 1311.08 C47.41 1301.76 27.24 1281.59 17.92 1255.98 C10.50 1232.53 10.50 1210.74 10.50 1167.16 L10.50 161.84 C10.50 118.26 10.50 96.47 17.92 73.02 C27.24 47.41 47.41 27.24 73.02 17.92 C96.47 10.50 118.26 10.50 161.84 10.50Z" fill="#000"/></svg>
<div class="a" style="left:2351px;top:488px;width:8px;height:8px;background:#232323;"></div>
<div class="a" style="left:2977px;top:488px;width:8px;height:8px;background:#232323;"></div>
<div class="a" style="left:2351px;top:1526px;width:8px;height:9px;background:#232323;"></div>
<div class="a" style="left:2977px;top:1526px;width:8px;height:9px;background:#232323;"></div>
<div class="a" style="left:2844px;top:349px;width:9px;height:8px;background:#232323;"></div>
<div class="a" style="left:2484px;top:1664px;width:9px;height:8px;background:#232323;"></div>
<svg class="a" style="left:2373px;top:372px;" width="589" height="1278" viewBox="0 0 589 1278"><path d="M128.41 0.00 L460.59 0.00 C497.57 0.00 516.05 0.00 535.95 6.29 C557.68 14.20 574.80 31.32 582.71 53.05 C589.00 72.95 589.00 91.43 589.00 128.41 L589.00 1149.59 C589.00 1186.57 589.00 1205.05 582.71 1224.95 C574.80 1246.68 557.68 1263.80 535.95 1271.71 C516.05 1278.00 497.57 1278.00 460.59 1278.00 L128.41 1278.00 C91.43 1278.00 72.95 1278.00 53.05 1271.71 C31.32 1263.80 14.20 1246.68 6.29 1224.95 C0.00 1205.05 0.00 1186.57 0.00 1149.59 L0.00 128.41 C0.00 91.43 0.00 72.95 6.29 53.05 C14.20 31.32 31.32 14.20 53.05 6.29 C72.95 0.00 91.43 0.00 128.41 0.00Z" fill="#f2f2f7"/></svg>
<div class="a" style="left:2573.5px;top:388.6px;width:187.5px;height:55.4px;background:#000;border-radius:28px;"></div>
<div class="t" style="left:2396.6px;top:522.6px;height:63px;line-height:63px;font-size:50.5px;color:#000;letter-spacing:-0.86px;font-weight:bold;">Enrolments</div>
<div class="a" style="left:2403px;top:596.7px;width:529px;height:131.6px;background:#fff;border-radius:15px;"></div>
<div class="a" style="left:2432.6px;top:661.6px;width:499.4px;height:1.1px;background:#e4e4e6;"></div>
<div class="t" style="left:2433.4px;top:612.0px;height:36px;line-height:36px;font-size:26.01px;color:#000;letter-spacing:-0.38px;-webkit-text-stroke:0.45px #000;">By course</div>
<div class="t" style="left:2433.4px;top:677.4px;height:36px;line-height:36px;font-size:26.01px;color:#000;letter-spacing:-0.14px;-webkit-text-stroke:0.45px #000;">By student</div>
<svg class="a" style="left:2887px;top:617.8px;" width="18" height="24" viewBox="0 0 18 24"><polyline points="4.8,4 12.6,12 4.8,20" fill="none" stroke="#c4c4c7" stroke-width="2.6" stroke-linecap="round" stroke-linejoin="round"/></svg>
<svg class="a" style="left:2887px;top:683.6px;" width="18" height="24" viewBox="0 0 18 24"><polyline points="4.8,4 12.6,12 4.8,20" fill="none" stroke="#c4c4c7" stroke-width="2.6" stroke-linecap="round" stroke-linejoin="round"/></svg>
<div class="a" style="left:2334.8px;top:1756px;width:163.2px;height:52px;background:#fff;border-radius:14px;box-shadow:0 2px 7px rgba(0,0,0,0.13),0 0 1.5px rgba(0,0,0,0.22);"></div>
<div class="a" style="left:2518px;top:1756px;width:62.8px;height:52px;background:#fff;border-radius:14px;box-shadow:0 2px 7px rgba(0,0,0,0.13),0 0 1.5px rgba(0,0,0,0.22);"></div>
<div class="a" style="left:2601px;top:1756px;width:54px;height:52px;background:#fff;border-radius:14px;box-shadow:0 2px 7px rgba(0,0,0,0.13),0 0 1.5px rgba(0,0,0,0.22);"></div>
<div class="a" style="left:2792px;top:1756px;width:208px;height:52px;background:#fff;border-radius:14px;box-shadow:0 2px 7px rgba(0,0,0,0.13),0 0 1.5px rgba(0,0,0,0.22);"></div>
<svg class="a" style="left:2352.6px;top:1768.8px;" width="26.4" height="26.4" viewBox="0 0 26.4 26.4"><circle cx="13.2" cy="13.2" r="13.2" fill="#3478f6"/><path d="M9.6 7.2 Q9.6 6 10.7 6.6 L19.6 12.3 Q20.6 13.2 19.6 14.1 L10.7 19.8 Q9.6 20.4 9.6 19.2 Z" fill="#fff"/></svg>
<svg class="a" style="left:2400px;top:1769px;" width="26" height="26" viewBox="0 0 26 26"><rect x="2.2" y="2.2" width="21.6" height="21.6" rx="3.2" fill="none" stroke="#4a4a4a" stroke-width="2.3"/><path d="M10 6.6 L10 18.6 L12.9 15.9 L15 20.6 L17.1 19.6 L15 15 L18.8 14.8 Z" fill="#4a4a4a"/></svg>
<svg class="a" style="left:2454.6px;top:1771.6px;" width="26" height="23" viewBox="0 0 26 23"><rect x="1.2" y="1.2" width="5.2" height="7.4" rx="0.8" fill="none" stroke="#4a4a4a" stroke-width="1.9"/><rect x="1.2" y="12.2" width="5.2" height="7.4" rx="0.8" fill="none" stroke="#4a4a4a" stroke-width="1.9"/><rect x="9.5" y="1.2" width="5.2" height="7.4" rx="0.8" fill="none" stroke="#4a4a4a" stroke-width="1.9"/><rect x="9.5" y="12.2" width="5.2" height="7.4" rx="0.8" fill="none" stroke="#4a4a4a" stroke-width="1.9"/><rect x="17.8" y="1.2" width="5.2" height="7.4" rx="0.8" fill="none" stroke="#4a4a4a" stroke-width="1.9"/><rect x="17.8" y="12.2" width="5.2" height="7.4" rx="0.8" fill="none" stroke="#4a4a4a" stroke-width="1.9"/></svg>
<svg class="a" style="left:2536.4px;top:1769.6px;" width="28" height="27" viewBox="0 0 28 27"><rect x="1.6" y="1.6" width="22.4" height="9.4" rx="4.7" fill="none" stroke="#4a4a4a" stroke-width="2.2"/><circle cx="6.8" cy="6.3" r="2.6" fill="#4a4a4a"/><rect x="0.6" y="14.2" width="24.4" height="11" rx="5.5" fill="#4a4a4a"/><circle cx="19.4" cy="19.7" r="3.2" fill="#fff"/></svg>
<svg class="a" style="left:2620.6px;top:1771.2px;" width="14.6" height="22.6" viewBox="0 0 15.5 24"><rect x="1.1" y="1.1" width="13.3" height="21.8" rx="3" fill="#cfcfcf" stroke="#4a4a4a" stroke-width="2.2"/><rect x="5.2" y="2.7" width="5.1" height="1.4" rx="0.7" fill="#4a4a4a"/><rect x="5.2" y="19.9" width="5.1" height="1.2" rx="0.6" fill="#4a4a4a" opacity="0.8"/></svg>
<svg class="a" style="left:2810.9px;top:1768.4px;" width="27" height="27" viewBox="0 0 27 27"><g fill="none" stroke="#4a4a4a" stroke-linecap="round"><circle cx="10.6" cy="10.6" r="8.4" stroke-width="2.4"/><path d="M17 17 L24 24" stroke-width="3.3"/><path d="M6.8 10.6 H14.4" stroke-width="2.2"/></g></svg>
<svg class="a" style="left:2858.8px;top:1768.4px;" width="27" height="27" viewBox="0 0 27 27"><g fill="none" stroke="#4a4a4a" stroke-linecap="round"><circle cx="10.6" cy="10.6" r="8.4" stroke-width="2.4"/><path d="M17 17 L24 24" stroke-width="3.3"/><path d="M9 8 L11.2 6.4 V14.8" stroke-width="1.9" stroke-linejoin="round"/></g></svg>
<svg class="a" style="left:2906.7000000000003px;top:1768.4px;" width="27" height="27" viewBox="0 0 27 27"><g fill="none" stroke="#4a4a4a" stroke-linecap="round"><circle cx="10.6" cy="10.6" r="8.4" stroke-width="2.4"/><path d="M17 17 L24 24" stroke-width="3.3"/><rect x="7.2" y="7.2" width="6.8" height="6.8" rx="1.2" stroke-width="2"/></g></svg>
<svg class="a" style="left:2954.6px;top:1768.4px;" width="27" height="27" viewBox="0 0 27 27"><g fill="none" stroke="#4a4a4a" stroke-linecap="round"><circle cx="10.6" cy="10.6" r="8.4" stroke-width="2.4"/><path d="M17 17 L24 24" stroke-width="3.3"/><path d="M6.6 10.6 H14.6 M10.6 6.6 V14.6" stroke-width="2.2"/></g></svg>
<svg class="a" style="left:663px;top:1851px;" width="32" height="22" viewBox="0 0 32 22"><path d="M4.4 1.4 H22 Q24 1.4 25.2 3 L30 9.6 L25.2 16.6 Q24 18.2 22 18.2 H4.4 Q1 18.2 1 14.8 V4.8 Q1 1.4 4.4 1.4 Z" fill="#3478f6"/></svg>
<div class="a" style="left:709px;top:1848px;width:2px;height:25px;background:#dedede;"></div>
<svg class="a" style="left:731px;top:1847px;" width="20" height="28" viewBox="0 0 20 28"><g fill="none" stroke="#6f6f6f" stroke-width="2"><rect x="1.4" y="1.4" width="4.6" height="25" rx="1"/><rect x="13.4" y="1.4" width="4.6" height="25" rx="1"/></g></svg>
<svg class="a" style="left:787px;top:1847px;" width="30" height="28" viewBox="0 0 30 28"><g fill="none" stroke="#b0b0b0" stroke-width="2" stroke-linejoin="round" stroke-linecap="round"><path d="M2 16.6 L13 5 L21 13.4"/><polyline points="14.4,14.4 22,14.4 22,6.8"/><rect x="6.4" y="21.4" width="17" height="4.4"/></g></svg>
<svg class="a" style="left:850px;top:1847px;" width="22" height="28" viewBox="0 0 22 28"><g fill="none" stroke="#b0b0b0" stroke-width="2" stroke-linejoin="round" stroke-linecap="round"><path d="M11 1.6 V17"/><polyline points="4.6,11 11,17.4 17.4,11"/><rect x="2.4" y="21.4" width="17" height="4.4"/></g></svg>
<svg class="a" style="left:910px;top:1847px;" width="22" height="28" viewBox="0 0 22 28"><g fill="none" stroke="#b0b0b0" stroke-width="2" stroke-linejoin="round" stroke-linecap="round"><path d="M11 17.6 V2.4"/><polyline points="4.6,8.4 11,2 17.4,8.4"/><rect x="2.4" y="21.4" width="17" height="4.4"/></g></svg>
<div class="a" style="left:951px;top:1848px;width:2px;height:25px;background:#dedede;"></div>
<svg class="a" style="left:970px;top:1847px;" width="27" height="30" viewBox="0 0 27 30"><g fill="none" stroke="#6f6f6f" stroke-width="2" stroke-linejoin="round" stroke-linecap="round"><path d="M11.9 13.3 L23.1 7.8 V22 L11.9 27.4 Z"/><path d="M7 25.2 V11.3 L19.9 4.9"/><path d="M2.8 23 V9.6 L16.1 3"/></g></svg>
<svg class="a" style="left:1028px;top:1847px;" width="30" height="28" viewBox="0 0 30 28"><g fill="none" stroke="#6f6f6f" stroke-width="2"><circle cx="5.8" cy="5.2" r="3.6"/><circle cx="5.8" cy="22.8" r="3.6"/><circle cx="23.4" cy="14" r="3.6"/><path d="M9 6.6 L20 12.6"/><path d="M9 21.4 L20 15.4"/></g></svg>
<svg class="a" style="left:1090px;top:1847px;" width="26" height="28" viewBox="0 0 26 28"><g fill="none" stroke="#6f6f6f" stroke-width="2"><rect x="1.6" y="2" width="21.6" height="10" rx="5"/><rect x="1.6" y="16" width="21.6" height="10" rx="5"/></g><circle cx="7" cy="7" r="2.9" fill="#6f6f6f"/><circle cx="17.8" cy="21" r="2.9" fill="#6f6f6f"/></svg>
<svg class="a" style="left:1148px;top:1846px;" width="30" height="30" viewBox="0 0 30 30"><path d="M26.4 3.2 L3.4 12.4 L14.4 14.8 L16.6 26.4 Z" fill="none" stroke="#6f6f6f" stroke-width="2.1" stroke-linejoin="round"/></svg>
<div class="a" style="left:1193px;top:1848px;width:2px;height:25px;background:#dedede;"></div>
<svg class="a" style="left:1213px;top:1849.4px;" width="23" height="23" viewBox="0 0 29 29"><rect x="0" y="0" width="29" height="29" rx="5.5" fill="#7b7b7b"/><g stroke="#fff" stroke-width="1.9" stroke-linecap="round" fill="none" opacity="0.95"><path d="M9.6 20 L16 9"/><path d="M13.2 9 L19.8 20"/><path d="M7.2 17.2 H21.8"/></g></svg>
<div class="t" style="left:1248.0px;top:1845.2px;height:32px;line-height:32px;font-size:22.95px;color:#262626;letter-spacing:0.36px;-webkit-text-stroke:0.45px #262626;">StudentsAndCourses</div>
<div class="t" style="left:2744.0px;top:1844.6px;height:33px;line-height:33px;font-size:23.87px;color:#7f7f7f;letter-spacing:0.20px;-webkit-text-stroke:0.45px #7f7f7f;">2 selected ranges</div>
<div class="a" style="left:2954px;top:1848px;width:2px;height:25px;background:#dedede;"></div>
<svg class="a" style="left:2972px;top:1847.6px;" width="28" height="27" viewBox="0 0 28 27"><rect x="1.4" y="1.4" width="24.6" height="23.4" rx="4.2" fill="none" stroke="#6f6f6f" stroke-width="2.1"/><rect x="5.2" y="16.6" width="17" height="5" rx="1.6" fill="#6f6f6f"/></svg>
</div></body></html>
